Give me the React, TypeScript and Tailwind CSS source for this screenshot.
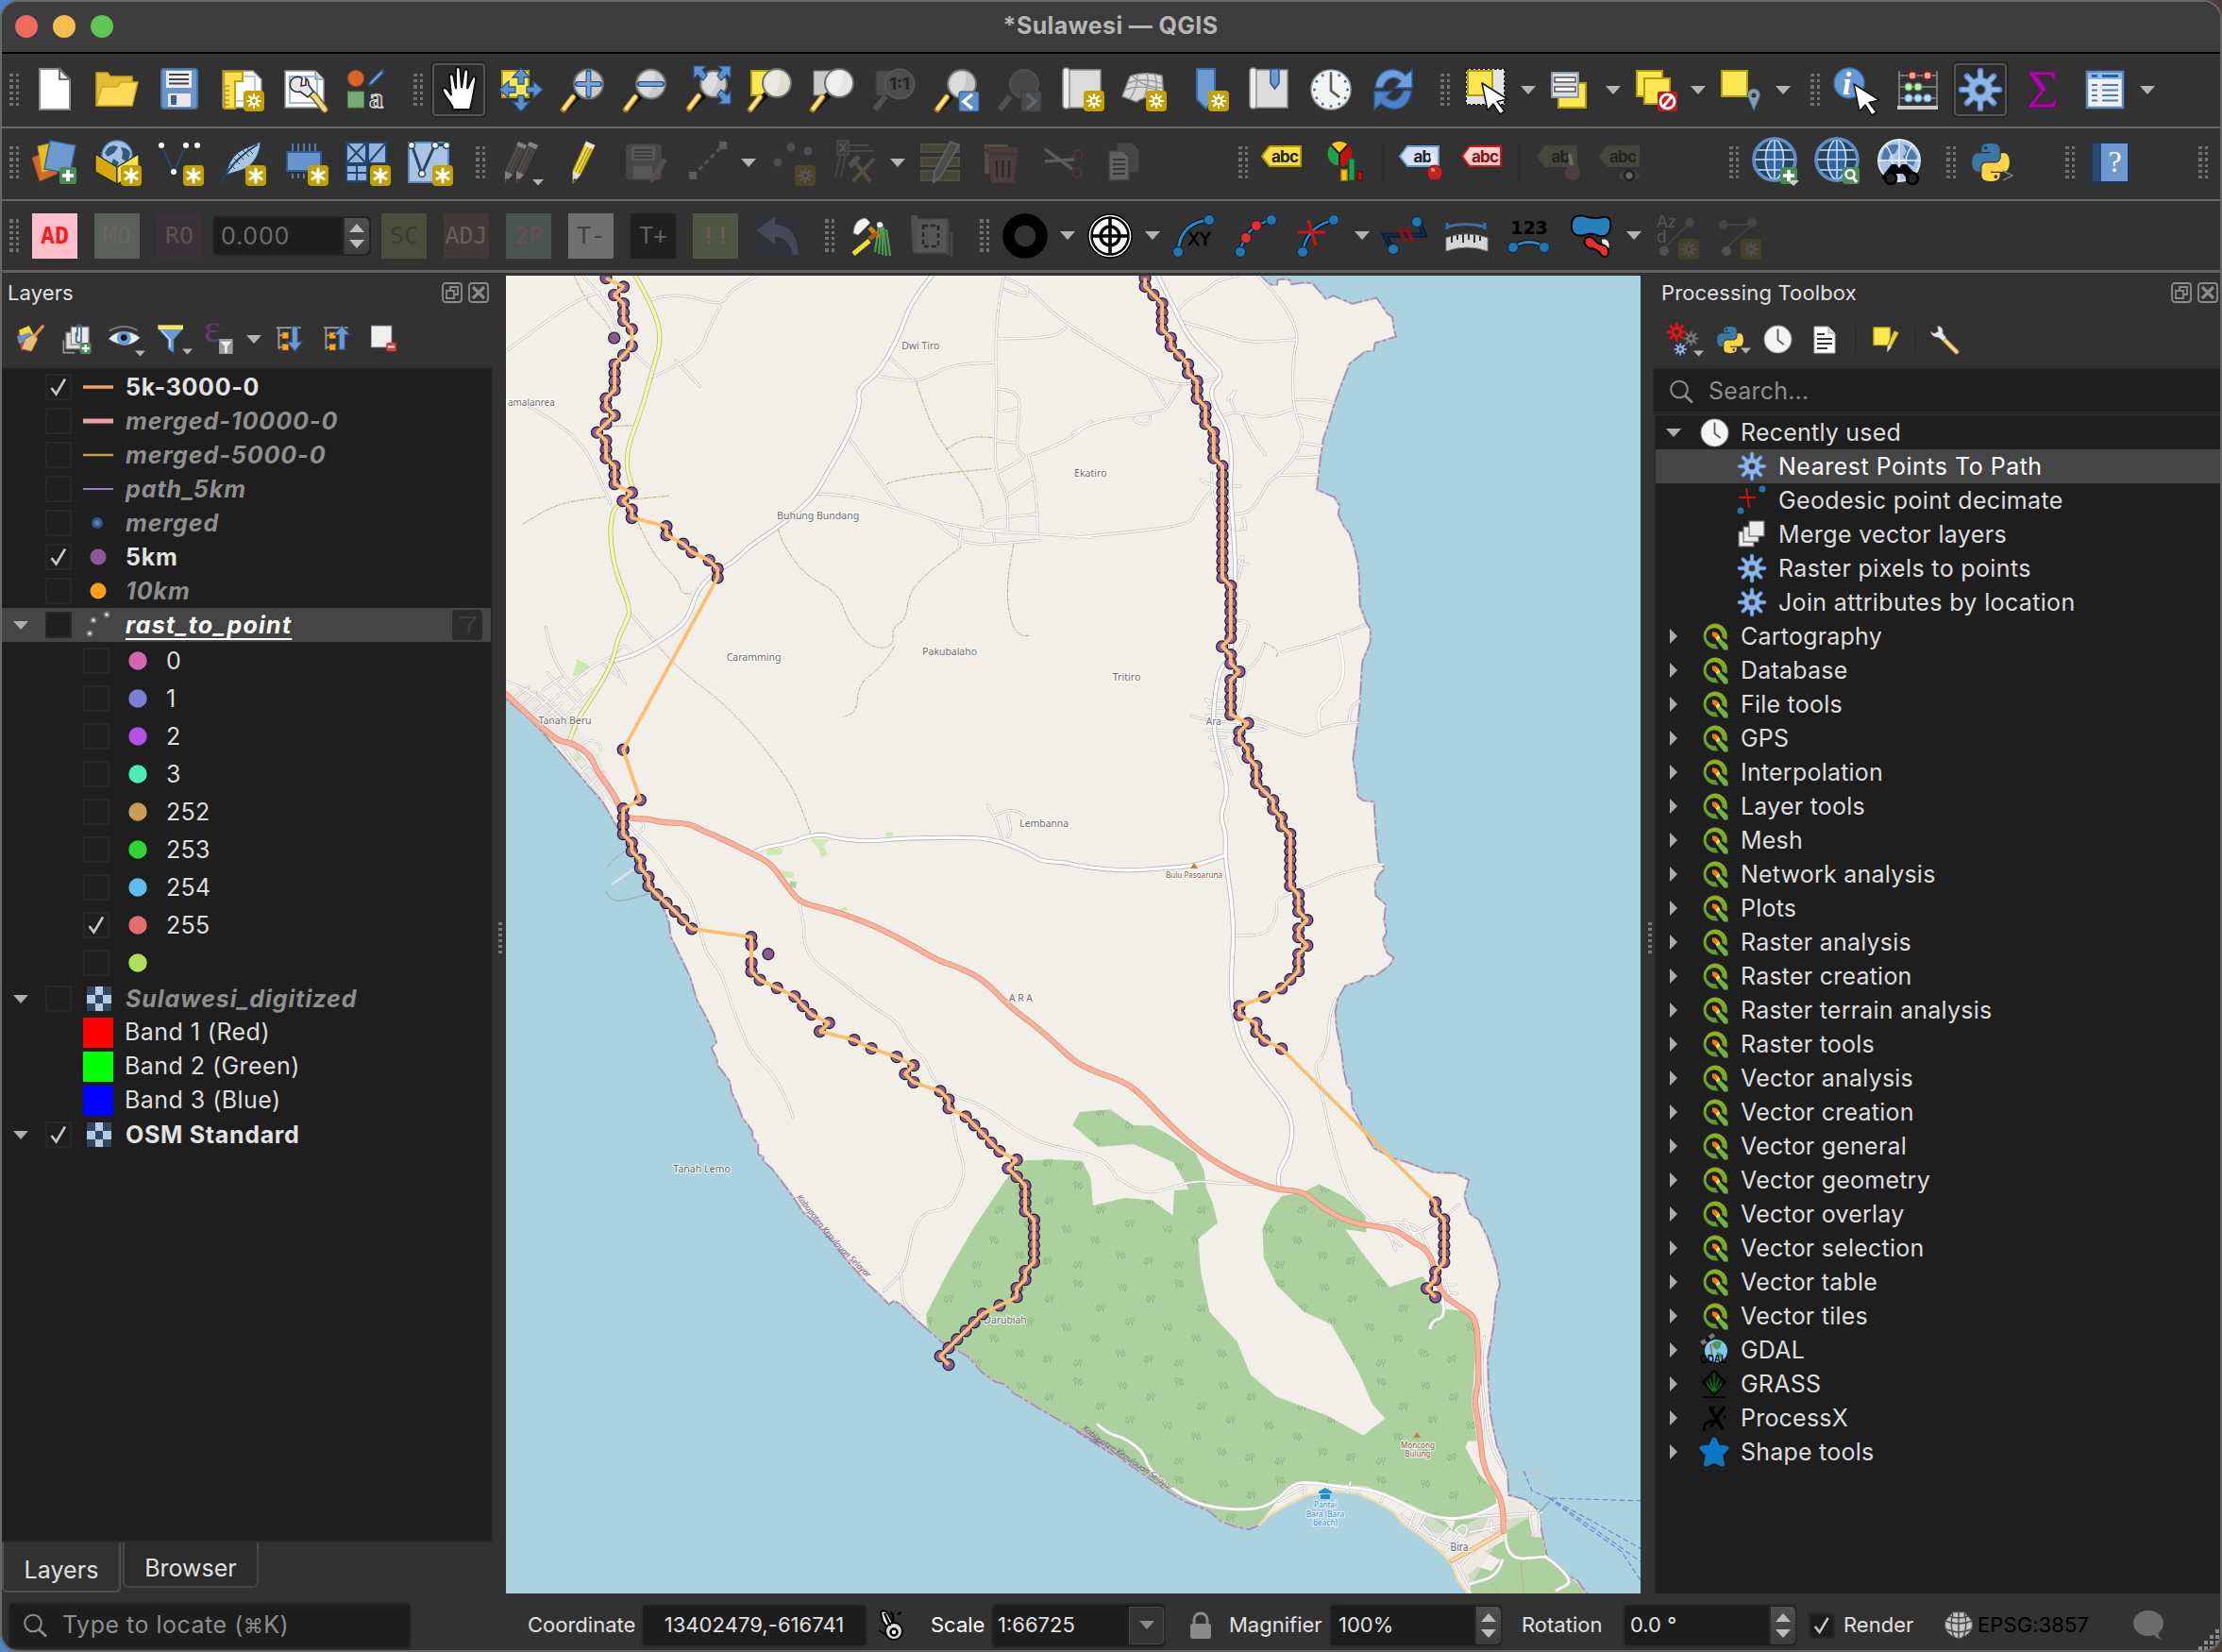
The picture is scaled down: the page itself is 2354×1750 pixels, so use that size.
import React from "react";

/* ------------------------------------------------------------------ */
/* Shared icon parts                                                   */
/* ------------------------------------------------------------------ */

type Kids = { children?: React.ReactNode };

const Ico = ({ children, off, size = 48 }: Kids & { off?: boolean; size?: number }) => (
  <svg
    width={size}
    height={size}
    viewBox="0 0 48 48"
    className={off ? "shrink-0 overflow-visible opacity-30" : "shrink-0 overflow-visible"}
  >
    {children}
  </svg>
);

const Star = ({ x = 26, y = 25, bold = false }) => (
  <g transform={`translate(${x} ${y})`}>
    <rect width="22" height="22" rx="4" fill="#c4a000" />
    <g stroke="#fff" strokeWidth={bold ? 3 : 2.2} strokeLinecap="round">
      {(bold ? [0, 60, 120] : [0, 45, 90, 135]).map((a) => (
        <line key={a} x1="11" y1="4" x2="11" y2="18" transform={`rotate(${a} 11 11)`} />
      ))}
    </g>
    {!bold && <circle cx="11" cy="11" r="3.2" fill="#c4a000" stroke="#fff" strokeWidth="2" />}
  </g>
);

const Plus = ({ x = 29, y = 28, s = 18 }) => (
  <g transform={`translate(${x} ${y}) scale(${s / 18})`}>
    <rect width="18" height="18" rx="3" fill="#4e8a58" />
    <path d="M9 3v12M3 9h12" stroke="#fff" strokeWidth="3.6" />
  </g>
);

const Cursor = ({ x = 20, y = 14 }) => (
  <path
    transform={`translate(${x} ${y})`}
    d="M0 0L27 17L16 19.500L24 30L19 33L12 22L6 29Z"
    fill="#fff"
    stroke="#111"
    strokeWidth="1.500"
    strokeLinejoin="round"
  />
);

const Lens = ({ x = 29.5, y = 18, r = 15.5, fill = "#c9c9c9" }) => (
  <g>
    <path d={`M${x - r * 0.72} ${y + r * 0.8}L3 45`} stroke="#111" strokeWidth="7" />
    <path d="M13 32L3 45" stroke="#a87b12" strokeWidth="6.500" strokeLinecap="round" />
    <path d="M13 31.500L3.500 44" stroke="#fce08a" strokeWidth="4" strokeLinecap="round" />
    <circle cx={x} cy={y} r={r} fill={fill} stroke="#6f6f6f" strokeWidth="2" />
    <path d={`M${x - r + 3} ${y}A${r - 3} ${r - 3} 0 0 1 ${x + 4} ${y - r + 3}Q${x + 6} ${y} ${x - 3} ${y + r - 3}A${r - 3} ${r - 3} 0 0 1 ${x - r + 3} ${y}Z`} fill="#fff" opacity=".35" />
  </g>
);

const Gear = ({ size = 48, fill = "#8fb5ea", edge = "#5d8cc9", hole = "#2b2b2b" }) => (
  <Ico size={size}>
    <g strokeLinecap="round">
      {[0, 45, 90, 135].map((a) => (
        <line key={a} x1="24" y1="4" x2="24" y2="44" stroke={edge} strokeWidth="6.500" transform={`rotate(${a} 24 24)`} />
      ))}
      <circle cx="24" cy="24" r="13.500" fill={edge} />
      {[0, 45, 90, 135].map((a) => (
        <line key={a} x1="24" y1="5" x2="24" y2="43" stroke={fill} strokeWidth="4" transform={`rotate(${a} 24 24)`} />
      ))}
    </g>
    <circle cx="24" cy="24" r="12" fill={fill} />
    <circle cx="24" cy="24" r="5.500" fill={hole} stroke={edge} strokeWidth="1.500" />
  </Ico>
);

const Python = ({ size = 40 }) => (
  <svg width={size} height={size} viewBox="0 0 111 112" className="shrink-0">
    <path fill="#3b78a8" d="M54.919 0C50.335.021 45.958.412 42.106 1.094 30.76 3.099 28.7 7.295 28.7 15.032v10.219h26.813v3.406H18.638c-7.793 0-14.616 4.684-16.75 13.594-2.462 10.213-2.571 16.586 0 27.25 1.905 7.938 6.457 13.594 14.25 13.594h9.219v-12.25c0-8.85 7.657-16.657 16.75-16.657h26.781c7.455 0 13.406-6.138 13.406-13.625v-25.53c0-7.267-6.13-12.726-13.406-13.938C64.282.328 59.502-.02 54.919 0zm-14.5 8.22c2.77 0 5.031 2.298 5.031 5.125 0 2.816-2.262 5.093-5.031 5.093-2.779 0-5.031-2.277-5.031-5.093 0-2.827 2.252-5.125 5.031-5.125z" />
    <path fill="#ffd545" d="M85.638 28.657v11.906c0 9.231-7.826 17-16.75 17H42.106c-7.336 0-13.406 6.279-13.406 13.625V96.72c0 7.266 6.319 11.54 13.406 13.625 8.488 2.495 16.627 2.946 26.782 0 6.75-1.955 13.406-5.888 13.406-13.625V86.501H55.513v-3.405H95.7c7.793 0 10.696-5.436 13.406-13.594 2.799-8.399 2.68-16.476 0-27.25-1.925-7.758-5.604-13.594-13.406-13.594zM70.575 93.313c2.779 0 5.031 2.277 5.031 5.093 0 2.827-2.252 5.125-5.031 5.125-2.77 0-5.031-2.298-5.031-5.125 0-2.816 2.261-5.093 5.031-5.093z" />
  </svg>
);

const Clock = ({ size = 48, ticks = true }) => (
  <Ico size={size}>
    <circle cx="24" cy="24" r="21" fill="#f4f5f3" stroke="#9a9c98" strokeWidth="1.500" />
    {ticks &&
      Array.from({ length: 12 }, (_, i) => (
        <circle key={i} cx="24" cy="6.500" r="1.500" fill="#3d6ea5" transform={`rotate(${i * 30} 24 24)`} />
      ))}
    <path d="M24 8V25L33 32" stroke="#555" strokeWidth="2.600" fill="none" />
  </Ico>
);

const Pencil = ({ x = 0, y = 0, c = "#f1dc3c", d = "#a5931a" }) => (
  <g transform={`translate(${x} ${y})`}>
    <path d="M23 2L32 6L17 37L9 46L9 33Z" fill={c} stroke={d} strokeWidth="1.200" />
    <path d="M26 6L12 34M29 7L15 36" stroke={d} strokeWidth="1.400" />
    <path d="M9 33L17 37L9 46Z" fill="#ddd" />
    <path d="M10 41L9 46L13 42Z" fill="#333" />
    <path d="M23 2L32 6L30 10L21 6Z" fill="#e8e8e8" />
  </g>
);

const GlobeWire = () => (
  <g>
    <circle cx="24" cy="21" r="22" fill="#26435f" stroke="#6f9bd0" strokeWidth="3.500" />
    <ellipse cx="24" cy="21" rx="9.500" ry="21" fill="#2f65a5" stroke="#cfdef0" strokeWidth="1.600" />
    <path d="M3 21H45M6 11H42M6 32H42M24 0V43" stroke="#cfdef0" strokeWidth="1.600" fill="none" />
    <circle cx="24" cy="21" r="22" fill="none" stroke="#5c8cc6" strokeWidth="2.500" />
  </g>
);

const Down = ({ small }: { small?: boolean }) => (
  <svg width={small ? 11 : 16} height={small ? 7 : 9} viewBox="0 0 16 9" className="shrink-0">
    <path d="M0 0H16L8 9Z" fill="#b4b4b4" />
  </svg>
);

/* ------------------------------------------------------------------ */
/* Toolbar building blocks                                             */
/* ------------------------------------------------------------------ */

const Grip = ({ rows = 6 }) => (
  <div className="grid grid-cols-2 gap-x-[3px] gap-y-[3px]">
    {Array.from({ length: rows * 2 }, (_, i) => (
      <span key={i} className="h-[3.200px] w-[3.500px] bg-[#707070]" />
    ))}
  </div>
);

const Slot = ({ children, on }: Kids & { on?: boolean }) => (
  <div className="flex w-[66px] shrink-0 items-center justify-center">
    {on ? (
      <div className="flex h-[60px] w-[60px] items-center justify-center rounded-[6px] border-2 border-[#252525] bg-[#2b2b2b] shadow-[inset_0_0_0_2px_#565656]">
        {children}
      </div>
    ) : (
      children
    )}
  </div>
);

const Menu = ({ children }: Kids) => (
  <div className="flex w-[90px] shrink-0 items-center">
    <Slot>{children}</Slot>
    <div className="flex w-6 justify-center">
      <Down />
    </div>
  </div>
);

const Handle = () => (
  <div className="flex w-8 shrink-0 justify-end pr-[5px]">
    <Grip />
  </div>
);
const FirstHandle = () => (
  <div className="flex w-[23px] shrink-0 justify-end pr-[5px]">
    <Grip />
  </div>
);

const Scroll = () => (
  <g fill="#dcdcdc" stroke="#8d8d8d" strokeWidth="1.500">
    <path d="M8 3H44V43H6Z" />
    <path d="M4 5Q4 1 7.500 1Q11 1 11 5V40Q11 44 7.500 44Q4 44 4 40Z" fill="#eee" />
  </g>
);

const Sq = ({ x, y, w = 27, h = 27 }: { x: number; y: number; w?: number; h?: number }) => (
  <rect x={x} y={y} width={w} height={h} fill="#fbe74f" stroke="#b79a0c" strokeWidth="2" />
);

const Row1 = () => (
  <div className="flex h-[79px] items-center border-b-2 border-[#6a6a6a] bg-[#323232] pb-[1px]">
    <FirstHandle />
    <Slot>
      <Ico>
        <path d="M8 2H29L40 13V45H8Z" fill="#fff" stroke="#8a8a8a" strokeWidth="2" />
        <path d="M29 2V13H40Z" fill="#e8e8e8" stroke="#6c6c6c" strokeWidth="2" />
      </Ico>
    </Slot>
    <Slot>
      <Ico>
        <path d="M2 41V6H14L17 10H40V16" fill="#e3bd33" stroke="#c79d16" strokeWidth="1.500" />
        <path d="M2 41L8 21H24L28 16H46L40 41Z" fill="#fddc5c" stroke="#d0a51c" strokeWidth="1.500" />
      </Ico>
    </Slot>
    <Slot>
      <Ico>
        <rect x="5" y="2" width="38" height="42" rx="3" fill="#6b96cc" stroke="#4a72a6" strokeWidth="2" />
        <rect x="10" y="4" width="27" height="18" fill="#ececec" />
        <path d="M13 8H34M13 13H34M13 17.500H34" stroke="#444" strokeWidth="2" />
        <rect x="12" y="28" width="24" height="14" fill="#e9e9e9" />
        <rect x="15" y="30" width="6" height="10" fill="#3a5f90" />
      </Ico>
    </Slot>
    <Slot>
      <Ico>
        <path d="M4 4H36L45 13V43H4Z" fill="#fff" stroke="#8d8d8d" strokeWidth="1.500" />
        <path d="M12 10H38V36H12Z" fill="none" stroke="#9fb7ef" strokeWidth="1.500" />
        <path d="M5 5H25V15H17V44H6Z" fill="#fbe152" stroke="#c4a000" strokeWidth="2" />
        <path d="M6 20h5M6 25h5M6 30h5M6 35h5M6 40h5" stroke="#8a7200" strokeWidth="1.200" />
        <Star />
      </Ico>
    </Slot>
    <Slot>
      <Ico>
        <path d="M4 4H36L45 13V43H4Z" fill="#fff" stroke="#8d8d8d" strokeWidth="1.500" />
        <path d="M36 4V13H45" fill="#ddd" stroke="#8d8d8d" strokeWidth="1.500" />
        <path d="M9 10H38V38H9Z" fill="none" stroke="#9fb7ef" strokeWidth="2" />
        <path d="M30 26L36 32L46 45" stroke="#6f5c14" strokeWidth="8" strokeLinecap="round" />
        <path d="M30 26L36 32L46 45" stroke="#ead88c" strokeWidth="5" strokeLinecap="round" />
        <path d="M22 12A8 8 0 1 0 20 26L28 32L34 26L29 19A8 8 0 0 0 26 12L26 19L21 20Z" fill="#e6e6e6" stroke="#333" strokeWidth="1.600" />
      </Ico>
    </Slot>
    <Slot>
      <Ico>
        <circle cx="13" cy="12" r="8.500" fill="#d9652b" stroke="#a8481a" />
        <path d="M28 18L41 5" stroke="#2f5687" strokeWidth="5" strokeLinecap="round" />
        <path d="M29 17L40 6" stroke="#7ca5d8" strokeWidth="2" strokeLinecap="round" />
        <rect x="4.500" y="26" width="17" height="17" fill="#77ab72" stroke="#4f8a4c" />
        <text x="27" y="43" fontSize="30" fontWeight="700" fontFamily="Liberation Serif, serif" fill="#444" stroke="#ddd" strokeWidth="1.300">a</text>
      </Ico>
    </Slot>
    <Handle />
    <Slot on>
      <Ico>
        <path transform="translate(3 -1)" d="M15 46C15 40 6 33 4 26C3.500 23 7 22 9 25L13 31L11 11C11 7.500 15 7.500 15.500 11L18 24L18 4C18 0 22.500 0 22.500 4L24 23L26.500 6C27 2.500 31 3 31 6.500L30 24L35 13C36.500 10 40 11 39 15L36 32C35 38 34 41 33 46Z" fill="#fff" stroke="#111" strokeWidth="2" />
      </Ico>
    </Slot>
    <Slot>
      <Ico>
        <Sq x={4} y={4} w={28} h={28} />
        <g fill="#5f93cf" stroke="#28528a" strokeWidth="1.300">
          <path d="M24 1L33 11H27V18H21V11H15Z" />
          <path d="M24 47L33 37H27V30H21V37H15Z" />
          <path d="M1 24L11 15V21H18V27H11V33Z" />
          <path d="M47 24L37 15V21H30V27H37V33Z" />
        </g>
      </Ico>
    </Slot>
    <Slot>
      <Ico>
        <Lens />
        <path d="M29.500 6V30M18 18H41" stroke="#28528a" strokeWidth="6" strokeLinecap="round" />
        <path d="M29.500 6.500V29.500M18.500 18H40.500" stroke="#7ba4d6" strokeWidth="3.600" strokeLinecap="round" />
      </Ico>
    </Slot>
    <Slot>
      <Ico>
        <Lens />
        <path d="M18 18H41" stroke="#28528a" strokeWidth="6" strokeLinecap="round" />
        <path d="M18.500 18H40.500" stroke="#7ba4d6" strokeWidth="3.600" strokeLinecap="round" />
      </Ico>
    </Slot>
    <Slot>
      <Ico>
        <g transform="translate(1 -1)">
          <Lens x={29} y={19} r={14} />
          <g fill="#5f93cf" stroke="#28528a" strokeWidth="1.200">
            <path d="M8 0H21L17 4L22 10L18 15L12 9L8 13Z" />
            <path d="M47 0H34L38 4L33 10L37 15L43 9L47 13Z" />
            <path d="M47 40H34L38 36L33 30L37 25L43 31L47 27Z" />
          </g>
        </g>
      </Ico>
    </Slot>
    <Slot>
      <Ico>
        <Sq x={4} y={4} w={28} h={26} />
        <Lens x={31} y={17} r={15} fill="#dfdfcf" />
      </Ico>
    </Slot>
    <Slot>
      <Ico>
        <rect x="4" y="4" width="26" height="26" fill="#c9c9c9" stroke="#777" />
        <Lens x={31} y={17} r={15} fill="#e6e6e6" />
      </Ico>
    </Slot>
    <Slot>
      <Ico off>
        <rect x="4" y="4" width="26" height="26" fill="#888" stroke="#555" />
        <path d="M14 31L3 45" stroke="#999" strokeWidth="6" />
        <circle cx="29" cy="18" r="15.500" fill="#888" stroke="#aaa" strokeWidth="2" />
        <text x="29" y="24" textAnchor="middle" fontSize="18" fontWeight="700" fontFamily="Inter, sans-serif" fill="#000">1:1</text>
      </Ico>
    </Slot>
    <Slot>
      <Ico>
        <Lens x={29} y={18} r={15} />
        <rect x="26" y="26" width="21" height="21" rx="2" fill="#5f8fc9" stroke="#28528a" />
        <path d="M40 29L31 36.500L40 44" stroke="#fff" strokeWidth="3.500" fill="none" />
      </Ico>
    </Slot>
    <Slot>
      <Ico off>
        <path d="M14 31L3 45" stroke="#999" strokeWidth="6" />
        <circle cx="29" cy="18" r="15" fill="#777" stroke="#999" strokeWidth="2" />
        <rect x="26" y="26" width="21" height="21" rx="2" fill="#7d8894" stroke="#555" />
        <path d="M32 29L41 36.500L32 44" stroke="#ddd" strokeWidth="3" fill="none" />
      </Ico>
    </Slot>
    <Slot>
      <Ico>
        <Scroll />
        <Star />
      </Ico>
    </Slot>
    <Slot>
      <Ico>
        <path d="M9 10Q24 4 43 9L45 34Q28 28 16 37L1 31Z" fill="#dadada" stroke="#8a8a8a" strokeWidth="1.500" />
        <path d="M7 17Q24 10 44 18M4 24Q20 17 45 27M17 7Q18 20 9 34M27 6Q30 18 24 32M35 7Q40 20 34 31M12 10Q24 22 44 22" stroke="#999" strokeWidth="1.400" fill="none" />
        <Star />
      </Ico>
    </Slot>
    <Slot>
      <Ico>
        <path d="M14 2H33V34L23.500 44L14 34Z" fill="#6d9bd4" stroke="#3c6ba5" strokeWidth="2" />
        <Star />
      </Ico>
    </Slot>
    <Slot>
      <Ico>
        <Scroll />
        <path d="M26 2H35V17L30.500 23L26 17Z" fill="#6d9bd4" stroke="#28528a" strokeWidth="1.500" />
      </Ico>
    </Slot>
    <Slot>
      <Clock />
    </Slot>
    <Slot>
      <Ico>
        <path d="M5 22C6 8 16 1 26 3C31 4 34 6 37 9L44 3V22H26L32 15C26 9 17 10 13 22Z" fill="#6fa0dc" stroke="#2e5f9f" strokeWidth="1.500" />
        <path d="M43 25C42 39 32 46 22 44C17 43 14 41 11 38L4 45V26H22L16 32C22 38 31 37 35 25Z" fill="#4d82c6" stroke="#2e5f9f" strokeWidth="1.500" />
      </Ico>
    </Slot>
    <Handle />
    <Menu>
      <Ico>
        <rect x="3" y="2" width="41" height="38" fill="#e4e4e4" stroke="#222" strokeWidth="2" strokeDasharray="3 2" />
        <Sq x={5} y={4} w={26} h={26} />
        <Cursor x={20} y={17} />
      </Ico>
    </Menu>
    <Menu>
      <Ico>
        <Sq x={11} y={17} w={29} h={26} />
        <rect x="4" y="6" width="28" height="26" fill="#d9dde2" stroke="#8e99a5" strokeWidth="2" />
        <path d="M7 11H29V16H7ZM7 21H29V26H7Z" fill="#fff" stroke="#555" strokeWidth="1.500" />
      </Ico>
    </Menu>
    <Menu>
      <Ico>
        <Sq x={4} y={4} />
        <Sq x={12} y={12} />
        <rect x="26" y="26" width="21" height="21" rx="2" fill="#c9171e" />
        <circle cx="36.500" cy="36.500" r="7.500" fill="none" stroke="#fff" strokeWidth="3" />
        <path d="M32 42L41 31" stroke="#fff" strokeWidth="3" />
      </Ico>
    </Menu>
    <Menu>
      <Ico>
        <Sq x={4} y={4} />
        <path d="M38 46L32.500 33A6.500 6.500 0 1 1 43.500 33Z" fill="#7f9db2" stroke="#4b6b80" />
        <circle cx="38" cy="30" r="2.500" fill="#333" />
      </Ico>
    </Menu>
    <Handle />
    <Slot>
      <Ico>
        <circle cx="17" cy="17" r="16" fill="#6b97cf" stroke="#3d6ba3" strokeWidth="1.500" />
        <text x="10" y="29" fontSize="33" fontStyle="italic" fontWeight="700" fontFamily="Liberation Serif, serif" fill="#fff">i</text>
        <Cursor x={22} y={18} />
      </Ico>
    </Slot>
    <Slot>
      <Ico>
        <path d="M4 4V44M44 4V44M4 9H44M4 21H44M4 33H44" stroke="#777" strokeWidth="2" />
        <path d="M2 43H45" stroke="#ccc" strokeWidth="4" />
        <g strokeWidth="1.500">
          <g fill="#f3a3a3" stroke="#b31c1c"><circle cx="18" cy="9" r="4" /><circle cx="34" cy="9" r="4" /></g>
          <g fill="#c4eac0" stroke="#58a058"><circle cx="14" cy="21" r="4" /><circle cx="24" cy="21" r="4" /></g>
          <g fill="#bfe0f5" stroke="#5e9cc4"><circle cx="14" cy="33" r="4" /><circle cx="24" cy="33" r="4" /><circle cx="34" cy="33" r="4" /></g>
        </g>
      </Ico>
    </Slot>
    <Slot on>
      <Gear />
    </Slot>
    <Slot>
      <Ico>
        <path d="M10 5H37V13H35Q34 8.500 30 8.500H17L28 23L15 39H31Q36 39 37 33H39L37 43H9V41L22 25L10 8Z" fill="#a80aa8" stroke="#6d066d" />
      </Ico>
    </Slot>
    <Menu>
      <Ico>
        <rect x="5" y="5" width="38" height="38" fill="#eef0f2" stroke="#5c87bf" strokeWidth="2.500" />
        <path d="M6 6H42V13H6Z" fill="#8fb8ea" />
        <path d="M10 9.500H16M21 9.500H38" stroke="#2d5c9a" strokeWidth="3" />
        <path d="M10 19H16M21 19H38M10 24.500H16M21 24.500H38M10 30H16M21 30H38M10 35.500H16M21 35.500H38" stroke="#4d7cb8" strokeWidth="2" />
      </Ico>
    </Menu>
  </div>
);

const Tag = ({ text, fill, edge, ink = "#222" }: { text: string; fill: string; edge: string; ink?: string }) => (
  <g transform="translate(0 -1)">
    <path d="M1 18.500L9 8H42V29H9Z" fill={fill} stroke={edge} strokeWidth="2" />
    <text x="25" y="24.500" textAnchor="middle" fontSize="17" fontWeight="700" fontFamily="Inter, sans-serif" letterSpacing="-.8" fill={ink}>{text}</text>
  </g>
);

const Dots3 = ({ c = "#fff" }) => (
  <g fill={c}>
    <circle cx="5" cy="6" r="3" />
    <circle cx="31" cy="6" r="3" />
    <circle cx="43" cy="6" r="3" />
    <circle cx="18" cy="34" r="3" />
  </g>
);

const Row2 = () => (
  <div className="flex h-[77px] items-center border-b-2 border-[#6a6a6a] bg-[#323232] pb-[3px]">
    <FirstHandle />
    <Slot>
      <Ico>
        <path d="M0 19L18 12L27 36L8 44Z" fill="#d9652b" stroke="#a8481a" />
        <path d="M6 7L22 3L30 30L10 35Z" fill="#e8bd1f" stroke="#b08d0a" />
        <path d="M19 1L46 6L40 36L13 31Z" fill="#6d98d0" stroke="#35629b" strokeWidth="1.500" />
        <Plus x={29} y={29} />
      </Ico>
    </Slot>
    <Slot>
      <Ico>
        <circle cx="24" cy="17" r="16" fill="#a4c1e3" stroke="#5d87bd" strokeWidth="1.500" />
        <path d="M14 9Q20 4 25 8L21 14L14 18L11 14ZM28 8Q36 8 38 15L35 24L29 20L30 14ZM20 20L26 24L23 31L18 26Z" fill="#35587f" />
        <path d="M1 15L24 29V47L1 34Z" fill="#d6a80a" stroke="#222" strokeWidth="1.200" />
        <path d="M47 15L24 29V47L47 34Z" fill="#f7e04a" stroke="#222" strokeWidth="1.200" />
        <Star x={28} y={27} bold />
      </Ico>
    </Slot>
    <Slot>
      <Ico>
        <path d="M5 6L18 34L31 6" stroke="#284a72" strokeWidth="1.800" fill="none" />
        <Dots3 />
        <Star x={28} y={27} bold />
      </Ico>
    </Slot>
    <Slot>
      <Ico>
        <path d="M44 2Q44 10 40 18Q34 30 22 33L8 37Q10 18 26 10Q38 5 44 2Z" fill="#a9c6e6" stroke="#26435f" strokeWidth="1.300" />
        <path d="M41 5Q20 18 10 33Q4 40 2 46" stroke="#26435f" strokeWidth="2" fill="none" />
        <path d="M20 15L26 21M16 20L22 26M30 9L36 15M25 11L32 18M12 26L17 31" stroke="#26435f" strokeWidth="1" />
        <Star x={28} y={27} bold />
      </Ico>
    </Slot>
    <Slot>
      <Ico>
        <path d="M12 4V12M18 4V12M24 4V12M30 4V12M36 4V12M12 36V41M18 36V41M24 36V41" stroke="#4f7bb2" strokeWidth="2" />
        <rect x="6" y="13" width="36" height="20" fill="#6895cf" stroke="#2f5a92" strokeWidth="2" />
        <Star x={28} y={27} bold />
      </Ico>
    </Slot>
    <Slot>
      <Ico>
        <g fill="#8fb3de" stroke="#26436b" strokeWidth="2">
          <path d="M3 3H24V25H3ZM26 3H45V25H26ZM3 27H14V35H3ZM14 27H25V35H14ZM3 35H14V44H3ZM14 35H25V44H14Z" />
          <path d="M3 3L24 25M24 3L3 25M45 3L26 25" fill="none" />
        </g>
        <Star x={28} y={27} bold />
      </Ico>
    </Slot>
    <Slot>
      <Ico>
        <rect x="3" y="3" width="42" height="42" fill="#a9c3e4" stroke="#5d87bd" strokeWidth="2" />
        <path d="M6 5L17 36L31 5L43 6" stroke="#26435f" strokeWidth="3" fill="none" />
        <g fill="#fff" stroke="#26435f" strokeWidth="1.500">
          <circle cx="6" cy="6" r="3.500" /><circle cx="31" cy="6" r="3.500" /><circle cx="43" cy="6" r="3.500" /><circle cx="17" cy="36" r="3.500" />
        </g>
        <Star x={28} y={27} bold />
      </Ico>
    </Slot>
    <Handle />
    <Slot>
      <Ico>
        <g opacity=".45">
          <Pencil x={-2} c="#7c6f6a" d="#4e4742" />
          <Pencil x={10} c="#7c6f6a" d="#4e4742" />
        </g>
        <path d="M36 42H48L42 48.500Z" fill="#b4b4b4" />
      </Ico>
    </Slot>
    <Slot>
      <Ico>
        <Pencil x={4} />
      </Ico>
    </Slot>
    <Slot>
      <Ico off>
        <rect x="4" y="5" width="36" height="37" rx="3" fill="#777" stroke="#888" />
        <rect x="9" y="7" width="25" height="15" fill="#aaa" />
        <path d="M12 11H31M12 15H31M12 19H31" stroke="#555" strokeWidth="2" />
        <rect x="11" y="28" width="20" height="13" fill="#aaa" />
        <path d="M42 19L47 22L35 42L29 46L30 38Z" fill="#a09088" />
      </Ico>
    </Slot>
    <Slot>
      <Ico off>
        <path d="M8 38L40 6" stroke="#aaa" strokeWidth="3" strokeDasharray="5 4" />
        <rect x="4" y="34" width="8" height="8" fill="#bbb" />
        <rect x="36" y="2" width="8" height="8" fill="#bbb" />
      </Ico>
    </Slot>
    <div className="flex w-6 shrink-0 justify-center pr-1"><Down /></div>
    <Slot>
      <Ico off>
        <g fill="#999"><circle cx="22" cy="8" r="4.500" /><circle cx="40" cy="12" r="4.500" /><circle cx="8" cy="24" r="4.500" /></g>
        <g opacity=".6"><Star x={26} y={27} /></g>
      </Ico>
    </Slot>
    <div className="flex w-[90px] shrink-0 items-center">
      <Slot>
        <Ico off>
          <path d="M3 40L9 12M9 40L14 14M18 6H38M16 12H44" stroke="#777" strokeWidth="2" />
          <rect x="5" y="1" width="12" height="15" fill="#555" stroke="#aaa" />
          <path d="M8 4L14 13M14 4L8 13" stroke="#aaa" strokeWidth="2" />
          <path d="M24 24L40 44M44 20L22 44" stroke="#a39070" strokeWidth="4" />
          <path d="M18 28L28 18" stroke="#999" strokeWidth="6" />
        </Ico>
      </Slot>
      <div className="flex w-6 justify-center"><Down /></div>
    </div>
    <Slot>
      <Ico off>
        <path d="M4 5H44V13H4ZM4 19H44V28H4ZM4 33H44V43H4Z" fill="#6f6b48" stroke="#9a9768" strokeWidth="2" />
        <path d="M35 2L44 6L25 38L17 45L18 34Z" fill="#888" stroke="#ccc" strokeWidth="2" />
      </Ico>
    </Slot>
    <Slot>
      <Ico off>
        <path d="M5 5H30V10H5ZM5 12H10V36H5Z" fill="#99936a" />
        <path d="M8 9H40V14H8ZM10 17H39L36 45H13Z" fill="#8a5a5a" stroke="#804848" strokeWidth="2" />
        <path d="M18 22V40M24.500 22V40M31 22V40" stroke="#201414" strokeWidth="2.500" />
      </Ico>
    </Slot>
    <Slot>
      <Ico off>
        <g transform="translate(0 1)">
          <path d="M3 9L32 30M3 22L34 20" stroke="#bbb" strokeWidth="3.500" />
          <ellipse cx="38" cy="15" rx="4.500" ry="5" fill="none" stroke="#8a4444" strokeWidth="2.500" />
          <ellipse cx="37" cy="34" rx="4.500" ry="5" fill="none" stroke="#8a4444" strokeWidth="2.500" />
        </g>
      </Ico>
    </Slot>
    <Slot>
      <Ico off>
        <path d="M14 4H29L36 11V34H14Z" fill="#777" stroke="#777" />
        <path d="M5 12H20L26 18V43H5Z" fill="#ccc" stroke="#666" strokeWidth="1.500" />
        <path d="M9 21H22M9 26H22M9 31H22M9 36H22" stroke="#444" strokeWidth="2" />
      </Ico>
    </Slot>
    <div className="flex w-[100px] shrink-0 justify-end pr-[5px]"><Grip /></div>
    <Slot>
      <Ico><Tag text="abc" fill="#fbe04a" edge="#b89a00" /></Ico>
    </Slot>
    <Slot>
      <Ico>
        <g transform="translate(3 -1)">
          <circle cx="14" cy="16" r="13" fill="#18a34c" stroke="#4c3310" strokeWidth="1" />
          <path d="M14 16L5 6.500A13 13 0 0 1 23 6.500Z" fill="#fbc81e" />
          <path d="M14 16L23 6.500A13 13 0 0 1 14 29Z" fill="#c01010" />
          <path d="M14 16L5 6.500M14 16L23 6.500M14 16V29" stroke="#222" strokeWidth="2" />
          <path d="M16 33H22V44H16Z" fill="#fbc81e" stroke="#c88700" strokeWidth="1.500" />
          <path d="M24 21H30V44H24Z" fill="#18a34c" stroke="#0c5b29" strokeWidth="1" />
          <path d="M33 35H38V44H33Z" fill="#c01010" stroke="#6c0808" strokeWidth="1.500" />
        </g>
      </Ico>
    </Slot>
    <div className="flex w-3 shrink-0 justify-center"><span className="h-[40px] w-[2px] bg-[#2a2a2a]" /></div>
    <Slot>
      <Ico>
        <g transform="translate(2 0)">
          <Tag text="ab " fill="#cfe3fb" edge="#6d9bd4" />
          <path d="M35 17L38 32" stroke="#eee" strokeWidth="4" strokeLinecap="round" />
          <circle cx="38" cy="35" r="8" fill="#bf2424" stroke="#7f1010" />
          <circle cx="36" cy="32" r="2" fill="#e88" />
        </g>
      </Ico>
    </Slot>
    <Slot>
      <Ico><g transform="translate(2 0)"><Tag text="abc" fill="#f8d3d3" edge="#dc1414" ink="#8d1010" /></g></Ico>
    </Slot>
    <div className="flex w-3 shrink-0 justify-center"><span className="h-[40px] w-[2px] bg-[#2a2a2a]" /></div>
    <Slot>
      <Ico off>
        <g transform="translate(4 0)">
          <Tag text="ab " fill="#77765f" edge="#6f6e5d" ink="#000" />
          <path d="M35 17L38 32" stroke="#eee" strokeWidth="4" strokeLinecap="round" />
          <circle cx="38" cy="35" r="8" fill="#8a5f5f" />
        </g>
      </Ico>
    </Slot>
    <Slot>
      <Ico off>
        <g transform="translate(4 0)">
          <Tag text="abc" fill="#77765f" edge="#6f6e5d" ink="#000" />
          <ellipse cx="32" cy="38" rx="11" ry="6" fill="#666" />
          <circle cx="32" cy="38" r="5" fill="#dde" stroke="#000" strokeWidth="3" />
        </g>
      </Ico>
    </Slot>
    <div className="flex w-[100px] shrink-0 justify-end pr-[5px]"><Grip /></div>
    <Slot>
      <Ico>
        <GlobeWire />
        <Plus x={30} y={29} s={18} />
        <path d="M38 43H50L44 49Z" fill="#ccc" />
      </Ico>
    </Slot>
    <Slot>
      <Ico>
        <GlobeWire />
        <rect x="30" y="29" width="18" height="18" rx="3" fill="#4e8a58" />
        <circle cx="38" cy="36.500" r="4.500" fill="none" stroke="#fff" strokeWidth="2.500" />
        <path d="M41 40L45 45" stroke="#fff" strokeWidth="3" />
      </Ico>
    </Slot>
    <Slot>
      <Ico>
        <circle cx="24" cy="22" r="22" fill="#a7c3e4" stroke="#dce9f7" strokeWidth="2" />
        <path d="M8 10Q16 3 24 6L20 14L14 17L12 24L5 20ZM28 5Q38 7 43 18L39 28L32 24L28 18L32 12Z" fill="#4f78ac" />
        <path d="M3 22H45M24 1V43M10 6Q24 24 10 40M38 6Q24 24 38 40" stroke="#eef5fc" strokeWidth="1.300" fill="none" />
        <path d="M16 26H21L24 30L27 26H32L44 40L36 46L28 36H20L12 46L5 40Z" fill="#0a0a0a" />
        <circle cx="15" cy="41" r="6" fill="#222" stroke="#000" strokeWidth="2.500" />
        <circle cx="38" cy="41" r="6" fill="#222" stroke="#000" strokeWidth="2.500" />
      </Ico>
    </Slot>
    <Handle />
    <div className="flex w-[66px] shrink-0 items-center pl-3">
      <Python />
      <svg width="12" height="12" viewBox="0 0 12 12" className="mt-7 -ml-2"><path d="M1 1L11 6L1 11" stroke="#777" strokeWidth="1.800" fill="none" /></svg>
    </div>
    <div className="flex w-[60px] shrink-0 justify-end pr-[5px]"><Grip /></div>
    <Slot>
      <Ico>
        <rect x="4" y="3" width="39" height="42" fill="#6d98d0" stroke="#1d3557" strokeWidth="2" />
        <rect x="5" y="4" width="9" height="40" fill="#2b4a73" />
        <text x="28.500" y="34" textAnchor="middle" fontSize="32" fontFamily="Liberation Serif, serif" fill="#fff">?</text>
      </Ico>
    </Slot>
    <div className="flex w-[75px] shrink-0 justify-end pr-[5px]"><Grip /></div>
  </div>
);

const Box = ({ t, cls }: { t: string; cls: string }) => (
  <Slot>
    <div className={`flex h-12 w-12 items-center justify-center font-['DejaVu_Sans_Mono',monospace] text-[25px] ${cls}`}>{t}</div>
  </Slot>
);

const Steps = ({ cls = "" }) => (
  <div className={`flex w-[28px] shrink-0 flex-col items-center justify-center gap-2 rounded-r-[5px] border-l-2 border-[#2a2a2a] bg-gradient-to-b from-[#505050] to-[#3c3c3c] ${cls}`}>
    <svg width="16" height="9" viewBox="0 0 16 9"><path d="M0 9H16L8 0Z" fill="#bcbcbc" /></svg>
    <svg width="16" height="9" viewBox="0 0 16 9"><path d="M0 0H16L8 9Z" fill="#bcbcbc" /></svg>
  </div>
);

const Node = ({ x, y, c = "#1f78b4" }: { x: number; y: number; c?: string }) => (
  <circle cx={x} cy={y} r="5.500" fill={c} stroke="#0a2238" strokeWidth="1" />
);

const Row3 = () => (
  <div className="flex h-[76px] items-center border-b-[3px] border-[#5f5f5f] bg-[#323232]">
    <FirstHandle />
    <Box t="AD" cls="bg-[#ffc0cb] text-[#ff1a1a] tracking-[0px] font-semibold" />
    <Box t="MO" cls="bg-[#5a615a] text-[#6b6563]" />
    <Box t="RO" cls="bg-[#3a3239] text-[#5c5450]" />
    <div className="mr-[2px] ml-[2px] flex h-[42px] w-[168px] shrink-0 rounded-[5px] border-2 border-[#252525] bg-[#1d1d1d]">
      <span className="flex-1 pt-[1px] pl-[7px] text-[25px] leading-[36px] tracking-[0.8px] text-[#6e6e6e]">0.000</span>
      <Steps />
    </div>
    <div className="flex shrink-0">
      <Box t="SC" cls="bg-[#4d4d3d] text-[#333e2f]" />
      <Box t="ADJ" cls="bg-[#413838] text-[#665f5b]" />
      <Box t="2P" cls="bg-[#4a5453] text-[#6a5055]" />
      <Box t="T-" cls="bg-[#6f6f6f] text-[#3f3f3f]" />
      <Box t="T+" cls="bg-[#202020] text-[#606060]" />
      <Box t="!!" cls="bg-[#4e5744] text-[#7d5546]" />
      <Slot>
        <Ico>
          <rect x="1" y="2" width="46" height="46" fill="#303138" />
          <path d="M1 18L21 3V12Q44 12 46 44H40Q36 25 21 25V33Z" fill="#454859" />
        </Ico>
      </Slot>
    </div>
    <Handle />
    <Slot>
      <Ico>
        <g transform="translate(3 1)">
          <path d="M26 40L30 12M30 42L32 14M34 43L34 10M38 44L35 14M42 44L38 16" stroke="#4f9e57" strokeWidth="2.200" />
          <path d="M20 14L30 24" stroke="#c8841d" strokeWidth="5" />
          <path d="M3 20Q4 5 16 4L21 9L8 22Z" fill="#f2f2f2" stroke="#888" />
          <path d="M3 42L20 28" stroke="#e9e235" strokeWidth="5" />
          <path d="M20 26L28 20" stroke="#b3590e" strokeWidth="5" />
          <circle cx="31" cy="11" r="3" fill="#eee" />
        </g>
      </Ico>
    </Slot>
    <Slot>
      <Ico off>
        <path d="M6 6H40V42H4Z" fill="#aaa" stroke="#777" />
        <path d="M1 2H8V40H3Z" fill="#999" />
        <rect x="14" y="13" width="16" height="22" fill="none" stroke="#111" strokeWidth="2.500" strokeDasharray="5 3" />
        <path d="M40 8V44M44 20V46" stroke="#777" strokeWidth="3" />
      </Ico>
    </Slot>
    <Handle />
    <Menu>
      <Ico><circle cx="24" cy="24" r="17.500" fill="none" stroke="#000" strokeWidth="12.500" /></Ico>
    </Menu>
    <Menu>
      <Ico>
        <circle cx="24" cy="24" r="23" fill="#fff" stroke="#000" strokeWidth="1.500" />
        <circle cx="24" cy="24" r="19.500" fill="none" stroke="#000" strokeWidth="2.500" />
        <circle cx="24" cy="24" r="10" fill="none" stroke="#000" strokeWidth="3.500" />
        <path d="M24 4V44M4 24H44" stroke="#000" strokeWidth="3.500" />
      </Ico>
    </Menu>
    <Slot>
      <Ico>
        <path d="M6 41Q8 10 39 7" stroke="#06121e" strokeWidth="5" fill="none" />
        <path d="M6 41Q8 10 39 7" stroke="#2a86c8" strokeWidth="3" fill="none" />
        <Node x={39} y={7} /><Node x={6} y={41} />
        <text x="16" y="34" fontSize="19" fontFamily="DejaVu Sans, sans-serif" fill="#000" stroke="#000" strokeWidth=".5">XY</text>
      </Ico>
    </Slot>
    <Slot>
      <Ico>
        <path d="M6 41Q10 14 39 7" stroke="#06121e" strokeWidth="5" fill="none" />
        <path d="M6 41Q10 14 39 7" stroke="#2a86c8" strokeWidth="2.500" fill="none" />
        <Node x={39} y={7} /><Node x={6} y={41} /><Node x={12} y={26} c="#ee2b2b" /><Node x={23} y={13} c="#ee2b2b" />
      </Ico>
    </Slot>
    <Menu>
      <Ico>
        <path d="M6 41Q10 14 39 7" stroke="#06121e" strokeWidth="5" fill="none" />
        <path d="M6 41Q10 14 39 7" stroke="#2a86c8" strokeWidth="2.500" fill="none" />
        <Node x={39} y={7} /><Node x={6} y={41} />
        <path d="M12 7L20 34M1 20H30" stroke="#d41111" strokeWidth="3" />
      </Ico>
    </Menu>
    <Slot>
      <Ico>
        <path d="M39 8L45 23H3L11 38" stroke="#061a30" strokeWidth="5" fill="none" />
        <path d="M39 8L45 23H3L11 38" stroke="#0f3a60" strokeWidth="1.500" fill="none" />
        <path d="M18 16L25 30M25 15L33 30" stroke="#8d1010" strokeWidth="4" />
        <Node x={37} y={9} /><Node x={12} y={38} />
      </Ico>
    </Slot>
    <Slot>
      <Ico>
        <path d="M3 10V17M43 10V17M4 14Q23 9 42 14" stroke="#3d6fa3" strokeWidth="3" fill="none" />
        <path d="M2 26Q24 18 46 26V40Q24 32 2 40Z" fill="#d5d5d5" stroke="#888" />
        <path d="M8 24V31M14 23V28M20 22V31M26 22V28M32 22.500V31M38 24V29" stroke="#222" strokeWidth="1.800" />
      </Ico>
    </Slot>
    <Slot>
      <Ico>
        <text x="24" y="22" textAnchor="middle" fontSize="19" fontFamily="DejaVu Sans, sans-serif" fontWeight="700" fill="#000">123</text>
        <path d="M8 35Q24 26 40 35" stroke="#06121e" strokeWidth="5" fill="none" />
        <path d="M8 35Q24 26 40 35" stroke="#2a86c8" strokeWidth="2.800" fill="none" />
        <Node x={7} y={36} /><Node x={40} y={36} />
      </Ico>
    </Slot>
    <Menu>
      <Ico>
        <path d="M6 4Q12 1 20 4Q28 6 36 4Q46 2 44 16Q42 26 32 24Q24 20 17 23Q2 26 3 12Q3 7 6 4Z" fill="#2780be" stroke="#000" strokeWidth="2" />
        <path d="M34 27Q45 25 43 38L36 36Z" fill="#eee" stroke="#000" />
        <path d="M18 26Q24 23 28 29Q32 33 38 34Q44 38 41 45Q36 48 32 41Q28 37 22 37Q14 33 18 26Z" fill="#ee2b2b" stroke="#000" strokeWidth="1.800" />
      </Ico>
    </Menu>
    <Slot>
      <Ico off>
        <text x="3" y="15" fontSize="17" fontFamily="DejaVu Sans, sans-serif" fill="#aaa">Az</text>
        <text x="3" y="31" fontSize="17" fontFamily="DejaVu Sans, sans-serif" fill="#aaa">d</text>
        <path d="M12 36L38 10" stroke="#666" strokeWidth="2" />
        <circle cx="38" cy="10" r="5" fill="#776" /><circle cx="11" cy="40" r="5" fill="#999" />
        <g opacity=".45"><Star x={26} y={27} /></g>
      </Ico>
    </Slot>
    <Slot>
      <Ico off>
        <path d="M8 12H38L12 36" stroke="#666" strokeWidth="2" fill="none" />
        <circle cx="8" cy="12" r="5" fill="#776" /><circle cx="38" cy="10" r="5" fill="#776" /><circle cx="11" cy="40" r="5" fill="#999" />
        <g opacity=".45"><Star x={26} y={27} /></g>
      </Ico>
    </Slot>
  </div>
);

/* ------------------------------------------------------------------ */
/* Map canvas                                                          */
/* ------------------------------------------------------------------ */

const SHEETS: Record<string, [number, number, number, number]> = {
  A: [536, 290, 620 / 1568, 720 / 1568],
  B: [1140, 290, 600 / 1568, 720 / 1568],
  C: [640, 980, 560 / 1568, 640 / 1568],
  D: [1140, 980, 600 / 1568, 720 / 1568],
};

type Pt = [number, number];

const parse = (s: string): Pt[] => {
  let t = SHEETS.A;
  const out: Pt[] = [];
  for (const tok of s.trim().split(/\s+/)) {
    if (SHEETS[tok]) t = SHEETS[tok];
    else {
      const [x, y] = tok.split(",").map(Number);
      out.push([+(t[0] + x * t[2]).toFixed(1), +(t[1] + y * t[3]).toFixed(1)]);
    }
  }
  return out;
};

const poly = (s: string) => "M" + parse(s).map((p) => p.join(" ")).join("L");

const smooth = (s: string) => {
  const p = parse(s);
  let d = `M${p[0].join(" ")}`;
  for (let i = 1; i < p.length - 1; i++) {
    d += `Q${p[i][0]} ${p[i][1]} ${(p[i][0] + p[i + 1][0]) / 2} ${(p[i][1] + p[i + 1][1]) / 2}`;
  }
  return d + `L${p[p.length - 1].join(" ")}`;
};

const EAST =
  "B 500,0 520,12 540,25 556,25 558,14 575,12 592,14 596,24 630,20 655,22 692,58 712,50 765,69 832,55 862,92 876,100 880,125 886,145 828,160 824,178 800,180 757,208 735,255 715,300 700,345 685,380 676,430 667,498 715,515 730,535 726,555 742,583 757,598 770,630 780,665 784,700 786,765 803,803 815,820 815,850 793,895 790,930 785,1000 775,1070 767,1120 775,1160 780,1205 795,1215 825,1218 830,1290 838,1355 855,1372 840,1385 828,1405 830,1435 858,1455 853,1490 860,1520 850,1535 D 853,45 862,65 880,75 870,92 830,117 800,118 785,130 745,140 725,170 718,200 722,240 735,290 740,330 750,370 762,380 765,420 785,450 800,480 825,515 850,525 870,535 920,548 990,570 1050,572 1088,588 1075,625 1090,665 1115,680 1140,720 1165,785 1174,830 1163,860 1155,930 1140,1000 1142,1060 1148,1130 1165,1200 1195,1260 1198,1315 1245,1325 1280,1350 1290,1400 1305,1460 1350,1495 1388,1512 1418,1545";
const SOUTH = "D 1088,1545 1060,1515 1040,1475 1010,1445 960,1410 910,1385 880,1355 830,1330 780,1312 720,1305 640,1315 590,1335 540,1358 505,1385";
const SOUTHWEST =
  "D 505,1385 480,1394 440,1388 400,1375 365,1350 300,1330 250,1305 200,1275 140,1240 80,1200 0,1168 C 1510,1375 1430,1325 1350,1285 1240,1228 1215,1215 1190,1192 1160,1185 1120,1160 1080,1120 1050,1105 1020,1095 960,1050";
const WEST =
  "C 960,1050 920,1020 880,985 860,975 845,985 820,962 780,930 720,870 660,805 620,768 590,745 560,705 535,675 500,635 472,612 472,600 457,595 457,570 440,550 440,535 410,500 395,465 378,435 372,405 355,385 335,362 335,350 318,318 333,305 325,280 300,235 275,195 255,135 225,80 197,30 193,0 A 438,1500 425,1470 405,1440 385,1410 360,1370 340,1335 300,1280 260,1220 200,1160 150,1110 100,1060 50,1015 0,982";
const LAND = `A 0,0 ${EAST} ${SOUTH} ${SOUTHWEST} ${WEST}`;

const FOREST = `C 955,1010 1020,900 1100,780 1200,650 1240,611 1325,608 1418,612 1443,655 1450,728 1545,708 D 210,635 268,670 272,612 312,610 270,548 160,505 62,512 -10,462 10,431 95,425 158,462 212,463 270,490 330,525 355,568 360,605 378,640 392,687 338,724 345,800 370,893 445,960 483,1037 555,1088 692,1130 796,1177 856,1138 820,1105 782,1030 705,920 632,893 557,832 520,770 516,700 540,655 570,625 630,615 672,598 740,625 800,670 804,709 745,702 805,770 868,835 960,810 1000,860 1018,885 1070,890 1105,910 1108,960 1100,1060 1095,1100 1110,1190 1085,1190 1078,1205 1100,1240 1120,1270 1160,1305 1165,1340 1100,1365 1010,1370 960,1350 870,1315 800,1295 720,1290 650,1286 600,1290 550,1335 ${SOUTHWEST}`;

const WOODS = [
  "D 1190,1370 1255,1365 1262,1410 1290,1412 1302,1455 1350,1495 1390,1520 1418,1545 1095,1545 1085,1500 1110,1480 1150,1490 1175,1465 1130,1445 1185,1420",
  "D 1050,1372 1140,1366 1125,1400 1080,1412 1040,1398",
  "D 960,1360 1020,1375 1040,1395 1000,1405 950,1385",
];
const MEADOWS = [
  "A 190,888 225,905 215,925 180,928", "A 180,1110 192,1103 203,1118 190,1127", "A 700,1325 742,1325 738,1340 698,1342",
  "A 815,1305 870,1305 850,1318 862,1340 845,1348 838,1325", "A 1018,1288 1038,1288 1035,1300 1018,1298",
  "A 732,1375 772,1382 770,1395 745,1392", "A 870,1475 910,1460 918,1468 880,1480",
];

const RED =
  "A -10,962 50,1010 100,1050 145,1080 170,1080 225,1108 245,1150 290,1200 315,1250 340,1258 380,1257 415,1266 490,1268 520,1282 590,1308 660,1338 710,1360 750,1410 785,1448 830,1460 880,1470 975,1500 1040,1527 1110,1560 C 990,92 1060,112 1130,145 1200,210 1270,255 1330,300 1390,350 1440,375 D 135,362 180,390 240,445 330,515 430,570 520,600 565,611 630,614 680,652 760,687 850,697 890,705 930,730 975,750 995,800 1010,850 1060,880 1108,905 1113,980 1115,1055 1102,1095 1115,1150 1127,1255 1170,1310 1183,1350 1183,1398";
const YELLOW = [
  "A 340,-5 385,60 420,145 390,230 365,310 315,425 345,510",
  "A 345,510 310,530 285,545 278,610 295,690 333,770 325,800 300,840 285,900 230,980 190,1030 170,1078",
];
const MAJOR = [
  "A 1145,0 1085,65 1060,130 1025,190 990,235 942,265 950,305 915,380 860,460 830,508 780,550 720,590 650,630 610,665 570,682 515,725 490,790 460,820 390,858 345,880 290,892",
  "A 660,1338 680,1325 770,1312 795,1300 850,1292 890,1303 970,1310 1060,1302 1250,1300 1320,1308 1400,1335 1430,1355 1500,1358 B 0,1365 60,1372 140,1377 240,1372 330,1366 412,1342",
  "B 222,-5 250,45 275,85 310,145 370,200 410,235 370,265 385,310 420,355 432,430 425,490 437,600 442,700 440,800 425,890 395,915 380,1000 382,1060 400,1120 422,1195 398,1250 415,1290 412,1345 430,1440 437,1530 D 430,100 430,180 452,270 500,335 600,435 595,520 558,570 562,605",
];
const MINOR = [
  "B 725,835 745,900 730,960 690,985 668,1010 675,1050",
  "D 60,1152 85,1172 140,1185 190,1220 200,1255 300,1322 380,1345 500,1350 560,1325 600,1288 650,1285 750,1298 800,1300 870,1318 950,1355 1030,1372 1110,1362 1170,1335",
  "D 1190,1380 1180,1465 1300,1457", "D 1180,1465 1170,1500 1090,1520",
  "D 1300,1457 1385,1510 1330,1535", "D 980,930 985,912 1020,905 1015,860",
];
const LANES = [
  "B -10,130 100,185 190,232 290,260 400,240", "B 280,85 320,50 350,45 390,15 450,5",
  "B 500,0 570,60 618,140 600,190 600,310 632,370 610,420 560,465 530,480 490,548 440,555",
  "B 290,110 380,130 470,160 610,152", "B 600,290 680,290 712,298", "B 610,325 690,340", "B 620,390 680,397",
  "B 610,425 670,422", "B 560,465 670,463", "B 0,608 130,598 320,578 330,545 385,490",
  "B -10,368 60,335 245,320 265,290 290,260", "B 200,235 245,300", "B 160,335 165,345 205,348 205,325",
  "B 400,330 435,315 520,335 600,312", "B 460,325 480,370 525,418", "B 420,290 450,262 B 425,290 440,315",
  "B 345,475 370,490 440,490 455,490", "B 375,460 375,510 390,540", "B 430,590 475,595 B 460,555 470,590",
  "B 450,700 470,640 B 445,670 475,670",
  "B 570,872 650,855 725,835 800,810", "B 480,1020 590,1055 640,1070 675,1050 720,1038 780,1035", "B 755,1035 758,1000 785,985",
  "B 460,920 500,900 520,855", "B 850,1362 730,1380 660,1410 550,1440 560,1475 530,1525 440,1527", "B 450,800 478,800 475,830 430,900",
  "B 320,1020 350,1030 470,1037 545,1048 480,1057 360,1052", "B 360,985 440,985", "B 365,1000 440,1005", "B 360,1018 440,1020",
  "B 375,1100 450,1090", "B 385,1130 400,1140", "B 400,1080 430,1155", "B 468,920 465,980 440,1030 470,1100",
  "B 360,980 375,1000", "B 370,1070 415,1070", "B 440,1090 460,1130",
  "A 200,0 270,60 300,140 340,180 390,220", "A -10,185 60,140 180,65 250,42", "A 385,60 460,42 575,75 600,40 670,5",
  "A 575,75 540,130 520,185 390,240", "A 455,200 520,260", "A 50,300 150,350 210,400 245,460 280,530",
  "A 830,508 900,508 1050,540 1220,590 1420,600 1568,608", "A 920,380 1050,535", "A 990,235 1060,247 1120,245 1190,210 1310,205",
  "A 1030,195 1095,245", "A 1335,0 1310,100 1315,300 1308,460 1345,510 1345,590", "A 1340,10 1400,30 1460,90 1568,150",
  "A 1335,35 1400,60 1395,30", "A 1315,150 1460,150 1500,125", "A 1315,265 1370,270 1378,310 1365,410 1400,420 1315,460", "A 1315,320 1375,310",
  "A 1310,385 1365,390", "A 1400,420 1420,480 1425,600", "A 1400,420 1500,390 1568,340", "A 1345,510 1415,470",
  "A 1345,590 1270,597 1280,565 1425,555", "A 1155,575 1215,628 1365,620 1430,615", "A 1215,628 1220,590", "A 1305,595 1310,618", "A 330,780 400,850",
  "A 107,815 120,890 210,980", "A 0,940 60,955 160,1040", "A 20,980 60,955", "A 40,1000 80,970", "A 60,1020 110,985", "A 90,1035 150,990",
  "A 110,920 200,1000", "A 85,965 190,1050", "A 100,960 150,930", "A 120,990 180,940 240,900 290,880", "A 150,1030 230,960", "A 290,880 310,850 340,875",
  "A 290,900 320,945", "A 260,900 300,930", "A 150,1085 200,1150", "A 175,1080 240,1150", "A 160,1100 260,1210", "A 190,1090 270,1180 300,1230",
  "A 200,1150 245,1110", "A 225,1180 260,1150", "A 200,1090 215,1075 250,1080 255,1100", "A 1290,1225 1310,1250 1330,1308", "A 1310,1250 1350,1232 1390,1250", "A 1345,1250 1355,1280 1345,1300",
  "A 320,1260 345,1290 400,1330 460,1410 495,1440 515,1500 C 288,20 300,70 350,125 375,200 410,280 440,335 500,385 540,450 560,498",
  "A 345,1290 375,1285 360,1255", "A 785,1450 798,1500 C 592,20 595,50 620,95 700,145 800,215 870,250 900,310 955,350 970,390 1020,440 1120,465 1220,530 1300,568 1470,598 1520,650 D 100,575 180,617 230,615 330,588 410,597 515,598",
  "C 1030,480 1040,550 1068,620 1065,660 1035,720 1010,738 950,745 915,790 900,870 880,905 830,950", "C 880,905 885,970 905,1000 935,1015",
  "D 718,170 700,210 700,260 680,310 660,320 675,370 700,470 730,560 760,630 820,685 850,700",
  "D 835,690 935,675 975,745", "D 860,700 885,750", "D 890,690 930,715 970,700", "D 910,680 960,750", "D 930,715 1000,690 1060,645", "D 840,695 900,740",
  "D 1020,820 1040,860 1010,870", "D 1000,830 1050,830", "D 1005,845 1055,850", "D 1130,950 1120,1000 1130,1100 1145,1200 1190,1265",
  "D 1115,1000 1130,1200", "D 1100,1365 1290,1355", "D 1255,1360 1262,1410 1285,1410 1280,1350",
  "D 560,1330 640,1290 630,1310", "D 700,1310 705,1290", "D 760,1285 750,1310", "D 780,1310 785,1298", "D 845,1330 855,1310",
  "D 900,1360 960,1410 1080,1440", "D 920,1390 940,1350", "D 940,1400 970,1360", "D 960,1385 1000,1420", "D 990,1430 1030,1390", "D 1020,1445 1060,1405",
  "D 1050,1395 1070,1380 1085,1390 1075,1415 1050,1395", "D 1060,1480 1130,1420", "D 1050,1465 1090,1530", "D 1090,1400 1183,1385", "D 1130,1390 1170,1400", "D 1150,1375 1150,1400",
];
const TRACKS = [
  "A 45,578 120,535 210,520 270,515", "A 270,352 345,350", "A 340,545 385,640 460,705 470,738 495,738", "A 345,520 440,512",
  "A 400,850 450,905 600,1000 755,1160 800,1250 820,1300", "A 730,590 735,615 800,695 890,735 920,810 980,865 1040,860 1035,815 1070,800 1080,740 1115,700 1220,630",
  "A 1020,485 1060,470 1300,450", "A 1100,250 1130,335 1180,405 1270,510 1280,565", "A 1180,405 1230,375 1310,378",
  "A 1360,625 1340,710 1350,800 1375,835 1400,835", "A 1040,860 1010,905 945,945 940,1010 905,1022", "A 180,0 215,65 270,110 290,150", "B 520,850 560,865 555,885",
  "D 1230,1460 1240,1542", "D 1140,1500 1170,1540",
];

const WEST_TRACK =
  "A 268,10 315,30 290,49 315,69 315,89 315,108 337,128 337,167 315,188 291,209 291,229 291,248 291,268 268,288 268,307 291,327 268,346 244,366 268,385 268,405 268,425 291,444 291,464 291,485 337,505 313,524 337,544 337,563 430,583 430,603 475,623 498,642 544,661 567,681 567,701 314,1098 360,1214 314,1234 314,1254 314,1273 314,1293 337,1313 337,1332 360,1352 360,1371 382,1392 382,1412 405,1432 430,1452 453,1471 475,1490 498,1511 657,1530 C 437,52 437,98 437,120 462,142 513,163 565,185 590,210 615,232 667,254 640,276 742,298 793,320 868,342 918,364 893,386 918,408 997,431 1022,453 1022,475 1073,497 1098,519 1123,541 1148,565 1173,587 1224,609 1198,631 1224,653 1249,676 1249,698 1249,720 1249,742 1275,765 1275,786 1275,808 1275,830 1275,852 1275,875 1249,898 1249,920 1224,942 1224,965 1173,987 1123,1009 1098,1031 1073,1053 1047,1075 1022,1097 997,1119 1022,1141";
const EAST_TRACK =
  "B 191,10 191,29 214,49 238,69 238,89 238,108 238,128 262,148 262,167 286,188 310,209 310,229 335,248 335,268 335,288 358,307 358,327 358,346 381,366 381,385 381,405 381,425 405,444 405,464 405,484 405,504 405,524 405,543 405,563 405,583 405,603 405,623 405,642 405,662 405,681 405,701 428,720 428,740 428,760 428,779 428,801 428,820 428,840 404,860 428,879 428,899 452,918 428,938 428,958 428,978 428,998 428,1017 476,1037 452,1057 452,1076 476,1097 476,1116 499,1136 499,1156 499,1175 522,1195 546,1215 546,1235 569,1254 569,1274 593,1293 593,1313 593,1333 593,1352 593,1371 593,1391 593,1412 616,1432 616,1451 616,1471 640,1491 616,1511 616,1530 640,1550 D 616,67 616,87 616,106 593,125 569,146 522,166 452,187 452,207 499,226 499,246 522,266 569,285 995,640 995,660 1019,679 1019,699 1019,718 1019,738 1019,757 1019,777 995,800 995,818 971,838 995,858";

const LABELS: [string, string, number][] = [
  ["A 1111,165", "Dwi Tiro", 102], ["A 68,296", "amalanrea", 126], ["A 836,558", "Buhung Bundang", 220], ["A 664,883", "Caramming", 146],
  ["A 1189,871", "Pakubalaho", 146], ["A 158,1029", "Tanah Beru", 142], ["A 1442,1268", "Lembanna", 131], ["B 40,459", "Ekatiro", 90],
  ["B 140,930", "Tritiro", 78], ["B 381,1033", "Ara", 42], ["C 290,633", "Tanah Lemo", 184], ["C 1190,1023", "Darubiah", 138], ["C 1236,188", "A R A", 76],
];

const Tree = ({ x, y, f }: { x: number; y: number; f?: boolean }) => (
  <g transform={`translate(${x} ${y}) scale(${f ? -1 : 1} 1)`} fill="none" stroke="#8db683" strokeWidth="1">
    <circle cx="-2.500" cy="-2" r="2" />
    <path d="M-2.500 0V4M2.500 -4L0 2H5ZM2.500 2V4" />
  </g>
);

const MapCanvas = () => {
  const west = parse(WEST_TRACK);
  const east = parse(EAST_TRACK);
  const stray = parse("A 290,148 C 487,75");
  const line = (s: string, i: number, c: string, w: number) => (
    <path key={i} d={smooth(s)} stroke={c} strokeWidth={w} />
  );
  return (
    <svg viewBox="536 292 1202 1396" width="1202" height="1396" className="block font-['Noto_Sans','Open_Sans',sans-serif]">
      <defs>
        <pattern id="wood" width="107" height="104" patternUnits="userSpaceOnUse">
          <Tree x={12} y={12} /><Tree x={42} y={24} f /><Tree x={72} y={8} /><Tree x={96} y={34} f />
          <Tree x={20} y={48} f /><Tree x={60} y={54} /><Tree x={90} y={66} /><Tree x={10} y={82} />
          <Tree x={40} y={88} f /><Tree x={72} y={92} f />
        </pattern>
        <path id="border1" d={poly("C 570,706 640,786 700,846 800,932")} />
        <path id="border2" d={poly("D 16,1163 60,1193 120,1224 180,1258 285,1318")} />
      </defs>
      <rect x="536" y="292" width="1202" height="1396" fill="#abd2df" />
      <path d={poly(LAND) + "Z"} fill="#f2efe8" />
      <path d={poly(FOREST) + "Z"} fill="#add19e" />
      <path d={poly(FOREST) + "Z"} fill="url(#wood)" />
      {WOODS.map((s, i) => <path key={i} d={poly(s) + "Z"} fill="#add19e" />)}
      {MEADOWS.map((s, i) => <path key={i} d={poly(s) + "Z"} fill="#cdebb0" />)}
      <path d={poly("A 762,1400 780,1403 775,1418 760,1413") + "Z"} fill="#a5d3a0" />
      <path d={poly("A 0,962 60,950 150,1000 200,1060 250,1120 290,1190 310,1240 260,1200 150,1100") + "Z"} fill="#e6dfdc" opacity=".5" />
      <path d={poly("D 900,1375 960,1350 1040,1400 1180,1340 1210,1320 1280,1355 1185,1400 1130,1470 1085,1535 1040,1470") + "Z"} fill="#e8e2de" opacity=".6" />
      {[EAST, SOUTHWEST, WEST].map((s, i) => (
        <g key={i} fill="none">
          <path d={poly(s)} stroke="#c9bfcf" strokeWidth="2.500" />
          <path d={poly(s)} stroke="#9c90b4" strokeWidth="1.600" strokeDasharray="14 3 4 3" />
        </g>
      ))}
      <path d={poly(SOUTH)} stroke="#f0dcb0" strokeWidth="2.500" fill="none" />
      <g fill="none" strokeLinejoin="round" strokeLinecap="round">
        <g strokeDasharray="4 2 1.500 2">{TRACKS.map((s, i) => line(s, i, "#bfa684", 1))}</g>
        {LANES.map((s, i) => line(s, i, "#c4c2c2", 2.900))}
        {LANES.map((s, i) => line(s, i, "#ffffff", 1.500))}
        {MINOR.map((s, i) => line(s, i, "#c6c4c0", 3.800))}
        {MINOR.map((s, i) => line(s, i, "#ffffff", 2.700))}
        {MAJOR.map((s, i) => line(s, i, "#b3b3b3", 5))}
        {MAJOR.map((s, i) => line(s, i, "#ffffff", 3.400))}
        {YELLOW.map((s, i) => line(s, i, "#b4be78", 5))}
        {YELLOW.map((s, i) => line(s, i, "#f6f9b4", 3.400))}
        {line("D 1183,1398 1120,1430 1040,1466", 0, "#d8a45c", 5)}
        {line("D 1183,1398 1120,1430 1040,1466", 1, "#fcd6a4", 3.600)}
        {line(RED, 0, "#dc8c78", 6.200)}
        {line(RED, 1, "#f9b29c", 4.600)}
        {line("A 272,1370 280,1355 325,1328", 1, "#a3aaa9", 1)}
        {line("A 285,1408 345,1372", 1, "#dfe4e4", 2.500)}
        {line("A 268,1425 275,1440 305,1450 390,1428", 1, "#9aa3a3", 1)}
        <path d={poly("D 1195,1265 1275,1255 1308,1312")} stroke="#c3c8c8" strokeWidth="1.600" />
        <path d={poly("D 1310,1330 1280,1356")} stroke="#9aa3a3" strokeWidth="1.600" />
        <g stroke="#6f86d6" strokeWidth="1.200" strokeDasharray="5 4">
          <path d={poly("D 1240,1260 1262,1305 1310,1322 1566,1328")} />
          <path d={poly("D 1310,1322 1440,1380 1566,1440")} />
          <path d={poly("D 1310,1322 1430,1390 1566,1470")} />
          <path d={poly("D 1310,1322 1400,1380 1510,1445 1566,1515")} />
        </g>
      </g>

      <g textAnchor="middle" stroke="#fff" strokeOpacity=".7" strokeWidth="2.500" strokeLinejoin="round" style={{ paintOrder: "stroke" }}>
        {LABELS.map(([p, t, w]) => {
          const [x, y] = parse(p)[0];
          const k = SHEETS[p[0]][2] * (p[0] === "C" ? 0.92 : 1);
          return (
            <text key={t} x={x} y={y + 4} fontSize="11.500" fill="#6c6c6c" textLength={w * k} lengthAdjust="spacingAndGlyphs">{t}</text>
          );
        })}
        <text x="1265" y="930" fontSize="9.500" fill="#8a5a3a" textLength="60" lengthAdjust="spacingAndGlyphs">Bulu Pasoaruna</text>
        <text x="1502" y="1534" fontSize="9.500" fill="#8a5a3a" textLength="36" lengthAdjust="spacingAndGlyphs">Moncong</text>
        <text x="1502" y="1543" fontSize="9.500" fill="#8a5a3a" textLength="27" lengthAdjust="spacingAndGlyphs">Bulung</text>
        <g fill="#2f8be0" fontSize="9.500">
          <text x="1404" y="1597" textLength="24" lengthAdjust="spacingAndGlyphs">Pantai</text>
          <text x="1404" y="1607" textLength="40" lengthAdjust="spacingAndGlyphs">Bara (Bara</text>
          <text x="1404" y="1616" textLength="26" lengthAdjust="spacingAndGlyphs">beach)</text>
        </g>
        <text x="1546" y="1643" fontSize="12.500" fill="#666" textLength="19" lengthAdjust="spacingAndGlyphs">Bira</text>
      </g>
      <g fontSize="9" fontStyle="italic" fill="#7d5f8c" letterSpacing="-0.250">
        <text><textPath href="#border1">Kabupaten Kepulauan Selayar</textPath></text>
        <text><textPath href="#border2">Kabupaten Kepulauan Selayar</textPath></text>
      </g>
      <path d="M1265 914L1269 920H1261Z" fill="#c77c42" />
      <path d="M1501 1517L1505 1523H1497Z" fill="#c77c42" />
      <path d="M1404 1576L1411 1580V1582H1397V1580ZM1399 1583H1409V1588H1399Z" fill="#1f8fd0" />

      <g fill="#8a5a98" stroke="#231a26" strokeWidth="1.200">
        {[...west, ...east, ...stray].map(([x, y], i) => <circle key={i} cx={x} cy={y} r="6" />)}
      </g>
      <g fill="none" stroke="#fdbf6f" strokeWidth="3.800" strokeLinejoin="bevel">
        <path d={"M" + west.join("L")} />
        <path d={"M" + east.join("L")} />
      </g>
    </svg>
  );
};

/* ------------------------------------------------------------------ */
/* Side panels                                                         */
/* ------------------------------------------------------------------ */

const DockButtons = () => (
  <div className="flex gap-1.5">
    <svg width="22" height="22" viewBox="0 0 22 22" fill="none" stroke="#8c8c8c" strokeWidth="1.800">
      <rect x="1" y="1" width="20" height="20" rx="3" />
      <path d="M9 9V5H17V13H13M5 9H13V17H5Z" />
    </svg>
    <svg width="22" height="22" viewBox="0 0 22 22" fill="none" stroke="#8c8c8c" strokeWidth="1.800">
      <rect x="1" y="1" width="20" height="20" rx="3" />
      <path d="M5 5L17 17M17 5L5 17" strokeWidth="3.200" />
    </svg>
  </div>
);

const Check = ({ on, fill = "" }: { on?: boolean; fill?: string }) => (
  <span className={`flex h-7 w-7 shrink-0 items-center justify-center border-2 border-[#272727] ${fill}`}>
    {on && (
      <svg width="18" height="20" viewBox="0 0 18 20"><path d="M1.500 11L6.500 17.500L16 1.500" stroke="#c9c9c9" strokeWidth="2.600" fill="none" /></svg>
    )}
  </span>
);

const Twisty = ({ open, show }: { open?: boolean; show?: boolean }) => (
  <span className="flex w-[20px] shrink-0 justify-center">
    {show &&
      (open ? (
        <svg width="16" height="9" viewBox="0 0 16 9"><path d="M0 0H16L8 9Z" fill="#adadad" /></svg>
      ) : (
        <svg width="8" height="16" viewBox="0 0 8 16"><path d="M0 0V16L8 8Z" fill="#adadad" /></svg>
      ))}
  </span>
);

type Layer = { name: string; on?: boolean; line?: string; w?: number; dot?: string; r?: number; raster?: boolean; points?: boolean; open?: boolean };

const Sym = ({ l }: { l: Layer }) => (
  <svg width="32" height="32" viewBox="0 0 32 32" className="shrink-0">
    {l.line && <path d="M0 16H32" stroke={l.line} strokeWidth={l.w} />}
    {l.dot && <circle cx={l.r === 6 ? 15 : 16} cy="16" r={l.r ?? 8.500} fill={l.dot} />}
    {l.r === 6 && <circle cx="15" cy="16" r="3" fill="#4f80bd" />}
    {l.points && (
      <g fill="#eee" stroke="#777" strokeWidth="2">
        <circle cx="7" cy="25" r="2.500" /><circle cx="11" cy="11" r="2.500" /><circle cx="25" cy="5" r="2.500" />
      </g>
    )}
    {l.raster && (
      <g>
        <rect x="4" y="3" width="26" height="26" fill="#34465f" />
        <path d="M13 3H21V12H13ZM4 12H13V21H4ZM21 12H30V21H21ZM13 21H21V29H13Z" fill="#b3cbe8" />
      </g>
    )}
  </svg>
);

const TreeRow = ({ l, selected }: { l: Layer; selected?: boolean }) => (
  <div className={`flex h-9 items-center pl-[10px] ${selected ? "bg-[#454545]" : ""}`}>
    <Twisty show={l.open} open />
    <span className="ml-[16px] flex"><Check on={l.on} fill={selected ? "bg-[#1e1e1e]" : ""} /></span>
    <span className="ml-3 flex"><Sym l={l} /></span>
    <span
      className={`ml-[13px] text-[25px] leading-9 font-bold ${
        selected
          ? "tracking-[1.25px] text-white italic underline decoration-2 underline-offset-[5px]"
          : l.on
            ? "tracking-[0.7px] text-[#e2e2e2]"
            : "tracking-[0.95px] text-[#8e8e8e] italic"
      }`}
    >
      {l.name}
    </span>
    {selected && (
      <span className="mr-[9px] ml-auto flex h-8 w-8 items-center justify-center rounded bg-[#2b2b2b]">
        <svg width="24" height="24" viewBox="0 0 24 24"><path d="M3 4H21L14 12V21" stroke="#444" strokeWidth="1.500" fill="none" /><path d="M3 4L11 12V19" stroke="#333" strokeWidth="1.500" fill="none" /></svg>
      </span>
    )}
  </div>
);

const TOP_LAYERS: Layer[] = [
  { name: "5k-3000-0", on: true, line: "#eda75c", w: 3.500 },
  { name: "merged-10000-0", line: "#ee9aa6", w: 5 },
  { name: "merged-5000-0", line: "#c9a23a", w: 2.500 },
  { name: "path_5km", line: "#9a7fb8", w: 2 },
  { name: "merged", dot: "#2f5486", r: 6 },
  { name: "5km", on: true, dot: "#8d5a99" },
  { name: "10km", dot: "#ff9e17" },
];

const CLASSES: [string, string, boolean?][] = [
  ["0", "#d665b0"], ["1", "#7c7fd6"], ["2", "#b352ea"], ["3", "#4aedb4"], ["252", "#c99d52"],
  ["253", "#30d430"], ["254", "#5ec0ea"], ["255", "#e66d6f", true], ["", "#b1df57"],
];

const BANDS: [string, string][] = [["Band 1 (Red)", "#ff0000"], ["Band 2 (Green)", "#00ff00"], ["Band 3 (Blue)", "#0000ff"]];

const Tool = ({ children }: Kids) => <div className="relative flex w-[50px] shrink-0 justify-center">{children}</div>;
const Mini = () => <span className="absolute right-[3px] bottom-[-1px]"><Down small /></span>;

const Expand = ({ up }: { up?: boolean }) => (
  <Ico size={30}>
    <path d="M3 5H44M7 5V42M7 18H20M7 38H20" stroke="#9a9a9a" strokeWidth="3" fill="none" />
    <rect x="13" y="13" width="10" height="10" fill="#ffa51f" stroke="#c77400" />
    <rect x="13" y="33" width="10" height="10" fill="#ffa51f" stroke="#c77400" />
    {up ? <path d="M34 1L47 17H39V42H29V17H21Z" fill="#6d98d0" stroke="#2b5288" strokeWidth="2" /> : <path d="M34 45L47 29H39V3H29V29H21Z" fill="#6d98d0" stroke="#2b5288" strokeWidth="2" />}
  </Ico>
);

const LayersPanel = () => (
  <div className="flex w-[520px] shrink-0 flex-col">
    <div className="flex h-[42px] items-center justify-between pr-[4px] pl-[6px]">
      <span className="text-[22px] tracking-[0.1px] text-[#e0e0e0]">Layers</span>
      <DockButtons />
    </div>
    <div className="flex h-[60px] items-center border-b-2 border-[#292929] pb-[2px] pl-[5px]">
      <Tool>
        <Ico size={32}>
          <path d="M4 16L24 6L32 30L10 44Z" fill="#c8382f" />
          <path d="M6 10L22 3L30 18L10 26Z" fill="#f1d63c" />
          <path d="M3 20L24 14L28 24L6 32Z" fill="#5f93cf" />
          <path d="M16 24L30 16L36 24L26 44L10 40Z" fill="#e6bd7a" stroke="#8f6420" strokeWidth="1.500" />
          <path d="M32 18L44 4" stroke="#d89a3c" strokeWidth="5" strokeLinecap="round" />
        </Ico>
      </Tool>
      <Tool>
        <Ico size={32}>
          <path d="M2 26V46H20" stroke="#999" strokeWidth="2.500" fill="none" />
          <rect x="6" y="14" width="26" height="26" fill="#ddd" stroke="#888" strokeWidth="2" />
          <rect x="14" y="5" width="28" height="28" fill="#e8e8e8" stroke="#888" strokeWidth="2" />
          <path d="M22 14V28Q26 32 30 28V4Q26 -2 24 4V20" stroke="#3d6798" strokeWidth="2.600" fill="none" />
          <Plus x={28} y={30} s={18} />
        </Ico>
      </Tool>
      <Tool>
        <Ico size={36}>
          <path d="M1 24Q20 4 46 22Q28 42 1 24Z" fill="#e9eef3" stroke="#555" />
          <path d="M2 13Q22 1 42 12" stroke="#777" strokeWidth="2.500" fill="none" />
          <circle cx="23" cy="23" r="10" fill="#6d98d0" />
          <circle cx="23" cy="22" r="4.500" fill="#0d1a2a" />
        </Ico>
        <Mini />
      </Tool>
      <Tool>
        <Ico size={32}>
          <path d="M2 8H42L27 25V46L18 40V25Z" fill="#6d98d0" stroke="#34618f" />
          <path d="M2 2H42V9H2Z" fill="#f7e65a" />
          <path d="M8 11L21 25V38" stroke="#b9d3f0" strokeWidth="3" fill="none" />
        </Ico>
        <Mini />
      </Tool>
      <Tool>
        <Ico size={32}>
          <text x="0" y="29" fontSize="64" fontFamily="Liberation Serif, serif" fill="#5f3f6c">ε</text>
          <path d="M24 24H46V48H24Z" fill="#999" />
          <path d="M26 28H44L37 36V46H33V36Z" fill="#eee" />
        </Ico>
      </Tool>
      <div className="flex w-6 justify-center"><Down /></div>
      <Tool><Expand /></Tool>
      <Tool><Expand up /></Tool>
      <Tool>
        <Ico size={30}>
          <rect x="4" y="2" width="34" height="36" fill="#efefef" stroke="#aaa" strokeWidth="1.500" />
          <rect x="29" y="30" width="17" height="15" rx="3" fill="#dc3b40" />
          <path d="M32 37.500H43" stroke="#fff" strokeWidth="3.500" />
        </Ico>
      </Tool>
    </div>
    <div className="flex h-[1243px] flex-col border-r-2 border-b-2 border-[#292929] bg-[#1e1e1e] pt-[1px]">
      {TOP_LAYERS.map((l) => <TreeRow key={l.name} l={l} />)}
      <TreeRow l={{ name: "rast_to_point", points: true, open: true }} selected />
      {CLASSES.map(([name, color, on]) => (
        <div key={color} className="flex h-10 items-center pl-[86px]">
          <Check on={on} />
          <svg width="20" height="20" viewBox="0 0 20 20" className="ml-5"><circle cx="10" cy="10" r="9.700" fill={color} /></svg>
          <span className="ml-[20px] text-[25px] leading-10 tracking-[0.3px] text-[#dedede]">{name}</span>
        </div>
      ))}
      <TreeRow l={{ name: "Sulawesi_digitized", raster: true, open: true }} />
      {BANDS.map(([name, color]) => (
        <div key={name} className="flex h-9 items-center gap-3 pl-[86px] text-[25px] tracking-[0.45px] text-[#dedede]">
          <svg width="32" height="32"><rect width="32" height="32" fill={color} /></svg>
          {name}
        </div>
      ))}
      <TreeRow l={{ name: "OSM Standard", raster: true, open: true, on: true }} />
    </div>
    <div className="flex items-start text-[25px] text-[#e0e0e0]">
      <div className="flex h-[53px] w-[126px] items-center justify-center rounded-b-[6px] border-2 border-t-0 border-[#505050] pt-[9px] tracking-[0.1px]">Layers</div>
      <div className="ml-[2px] flex h-[48px] w-[144px] items-center justify-center rounded-b-[6px] border-2 border-t-0 border-[#484848] bg-[#2b2b2b] pt-[9px]">Browser</div>
    </div>
  </div>
);

const QLogo = () => (
  <svg width="29" height="29" viewBox="0 0 29 29">
    <defs>
      <linearGradient id="qg" x1="0" y1="0" x2="0" y2="1"><stop offset="0" stopColor="#93b023" /><stop offset="1" stopColor="#589632" /></linearGradient>
    </defs>
    <path d="M14 .500A13.500 13.500 0 1 0 18.500 27.300L15.500 22A8.500 8.500 0 1 1 22.300 15L27.300 18A13.500 13.500 0 0 0 14 .500Z" fill="url(#qg)" />
    <path d="M16.500 18.500L19.500 15.500L28.500 23.500V28.500H24.500Z" fill="#76b043" />
    <path d="M12 9.500H16L19 12.500L15.500 16.500L12 13.500Z" fill="#ee7913" />
    <path d="M15.500 16.500L18.500 12.500L20.500 15.500L17 18.500Z" fill="#f7e64d" />
  </svg>
);

const GROUPS = [
  "Cartography", "Database", "File tools", "GPS", "Interpolation", "Layer tools", "Mesh", "Network analysis", "Plots",
  "Raster analysis", "Raster creation", "Raster terrain analysis", "Raster tools", "Vector analysis", "Vector creation",
  "Vector general", "Vector geometry", "Vector overlay", "Vector selection", "Vector table", "Vector tiles",
];

const SmallGear = () => <Gear size={32} hole="#333" />;

const RECENT: [string, React.ReactNode][] = [
  ["Nearest Points To Path", <SmallGear />],
  ["Geodesic point decimate", (
    <svg width="32" height="32" viewBox="0 0 32 32">
      <path d="M2 13H20M10 3L13 24" stroke="#d41111" strokeWidth="1.800" />
      <circle cx="27" cy="4" r="3.500" fill="#1f78b4" /><circle cx="4" cy="27" r="3.500" fill="#1f78b4" />
    </svg>
  )],
  ["Merge vector layers", (
    <svg width="32" height="32" viewBox="0 0 32 32" fill="#ececec" stroke="#666" strokeWidth="1.200">
      <rect x="2" y="13" width="16" height="16" /><rect x="7" y="8" width="16" height="16" /><rect x="13" y="2" width="16" height="16" />
    </svg>
  )],
  ["Raster pixels to points", <SmallGear />],
  ["Join attributes by location", <SmallGear />],
];

const PROVIDERS: [string, React.ReactNode][] = [
  ["GDAL", (
    <svg width="34" height="36" viewBox="-1 0 34 36" className="shrink-0">
      <circle cx="18" cy="19" r="12" fill="#7fc9f0" />
      <path d="M13 12Q18 6 24 10L22 16L18 18Z" fill="#4c9c58" />
      <path d="M18 20L24 22L22 28Z" fill="#3f8f4c" />
      <path d="M12 12L14 26" stroke="#b04a4a" strokeWidth="1.500" />
      <path d="M1 9L6 6L9 10L4 13ZM10 3L15 0L17 4L12 7Z" fill="#777" />
      <circle cx="9" cy="7" r="2.500" fill="#111" />
      <text x="1" y="32" fontSize="12.500" fontWeight="700" fontFamily="Liberation Sans, sans-serif" fill="#000" textLength="28" lengthAdjust="spacingAndGlyphs">GDAL</text>
    </svg>
  )],
  ["GRASS", (
    <svg width="32" height="32" viewBox="0 0 32 32">
      <path d="M16 2L28 14L16 28L4 14Z" fill="#141414" stroke="#000" strokeWidth="1.500" />
      <path d="M16 24L16 4M16 24L11 11M16 24L21 10M15 24L8 15M17 24L24 16" stroke="#0b7a17" strokeWidth="1.300" />
      <path d="M4 30H28" stroke="#000" strokeWidth="1.500" />
    </svg>
  )],
  ["ProcessX", (
    <svg width="32" height="32" viewBox="0 0 32 32">
      <path d="M11 4L25 28M27 4L12 26" stroke="#000" strokeWidth="3.500" />
      <path d="M12 10L16 4M5 30L6 23L14 18M26 15H29" stroke="#000" strokeWidth="2.500" fill="none" />
    </svg>
  )],
  ["Shape tools", (
    <svg width="32" height="34" viewBox="0 0 32 34">
      <path d="M16 4L20 12L29 13L22.500 19.500L24.500 30L16 26L7.500 30L9.500 19.500L3 13L12 12Z" fill="#0f76c6" stroke="#0f76c6" strokeWidth="5" strokeLinejoin="round" />
    </svg>
  )],
];

const ToolRow = ({ name, icon, open, child, selected }: { name: string; icon: React.ReactNode; open?: boolean; child?: boolean; selected?: boolean }) => (
  <div className={`flex h-9 shrink-0 items-center pl-[9px] ${selected ? "bg-[#454545] text-white" : "text-[#dedede]"}`}>
    <Twisty show={!child} open={open} />
    <span className={`flex w-8 shrink-0 justify-center ${child ? "ml-[57px]" : "ml-[17px]"}`}>{icon}</span>
    <span className={`ml-3 text-[25px] leading-9 whitespace-nowrap ${selected ? "tracking-[0.5px]" : child ? "tracking-[0.35px]" : "tracking-[0.22px]"}`}>{name}</span>
  </div>
);

const SearchIcon = () => (
  <svg width="26" height="26" viewBox="0 0 26 26" fill="none" stroke="#8f8f8f">
    <circle cx="11" cy="10.500" r="8.800" strokeWidth="2" />
    <path d="M17 17L25 24.500" strokeWidth="2.800" />
  </svg>
);

const Processing = () => (
  <div className="flex flex-1 flex-col">
    <div className="flex h-[42px] items-center justify-between pr-[2px] pl-[8px]">
      <span className="text-[22px] tracking-[0.15px] text-[#e0e0e0]">Processing Toolbox</span>
      <DockButtons />
    </div>
    <div className="flex h-[60px] items-center pb-[3px] pl-[6px]">
      <Tool>
        <svg width="34" height="34" viewBox="0 0 48 48" className="overflow-visible">
          <g transform="translate(-2 -4) scale(.68)"><Gear fill="#d81b1b" edge="#a80f0f" hole="#323232" /></g>
          <g transform="translate(24 10) scale(.5)"><Gear fill="#7a7a7a" edge="#5c5c5c" hole="#323232" /></g>
          <g transform="translate(10 28) scale(.42)"><Gear hole="#323232" /></g>
        </svg>
        <Mini />
      </Tool>
      <Tool><Python size={28} /><Mini /></Tool>
      <Tool><Clock size={33} ticks={false} /></Tool>
      <Tool>
        <svg width="24" height="30" viewBox="0 0 24 30">
          <path d="M1 1H16L23 8V29H1Z" fill="#fff" stroke="#aaa" />
          <path d="M16 1V8H23" fill="#ddd" stroke="#999" />
          <path d="M4 9H12M4 14H20M4 19H20M4 24H15" stroke="#333" strokeWidth="1.800" />
        </svg>
      </Tool>
      <span className="mr-[6px] ml-[7px] h-7 w-[2px] bg-[#2c2c2c]" />
      <Tool>
        <Ico size={30}>
          <Sq x={3} y={3} w={28} h={30} />
          <path d="M38 8L46 12L33 36L26 45L27 33Z" fill="#e6d23c" stroke="#665c12" strokeWidth="1.500" />
          <path d="M27 33L33 36L26 45Z" fill="#ddd" />
        </Ico>
      </Tool>
      <span className="mr-[5px] ml-[5px] h-7 w-[2px] bg-[#2c2c2c]" />
      <Tool>
        <Ico size={32}>
          <path d="M24 24L43 43" stroke="#8a7420" strokeWidth="8.500" strokeLinecap="round" />
          <path d="M24 24L43 43" stroke="#efd98a" strokeWidth="5.500" strokeLinecap="round" />
          <path d="M13 2Q23 3 21 13L27 21L22 26L14 20Q4 20 2 11L8 14L14 11Z" fill="#e6e6e6" stroke="#777" />
        </Ico>
      </Tool>
    </div>
    <div className="flex h-[47px] items-center gap-4 border-b-2 border-[#292929] bg-[#1e1e1e] pt-[2px] pl-4 text-[25px] tracking-[0.2px] text-[#8f8f8f] shadow-[0_0_0_1px_#282828]">
      <SearchIcon />
      Search...
    </div>
    <div className="mt-[2px] flex h-[1248px] flex-col border-l-2 border-[#2b2b2b] bg-[#1e1e1e]">
      <ToolRow name="Recently used" icon={<Clock size={33} ticks={false} />} open />
      {RECENT.map(([name, icon], i) => <ToolRow key={name} name={name} icon={icon} child selected={i === 0} />)}
      {GROUPS.map((name) => <ToolRow key={name} name={name} icon={<QLogo />} />)}
      {PROVIDERS.map(([name, icon]) => <ToolRow key={name} name={name} icon={icon} />)}
    </div>
  </div>
);

const Splitter = ({ cls }: { cls: string }) => (
  <div className={`flex shrink-0 flex-col items-center justify-center gap-[3px] pt-[10px] ${cls}`}>
    {Array.from({ length: 6 }, (_, i) => <span key={i} className="h-[3px] w-[4px] bg-[#777]" />)}
  </div>
);

/* ------------------------------------------------------------------ */
/* Status bar                                                          */
/* ------------------------------------------------------------------ */

const field = "flex items-center rounded-[4px] bg-[#1d1d1d] shadow-[0_0_0_2px_#292929]";

const StatusBar = () => (
  <div className="flex h-[60px] shrink-0 items-center pt-[7px] text-[22px] text-[#e2e2e2]">
    <div className={`${field} ml-[8px] h-[46px] w-[424px] shrink-0 gap-4 pl-[14px] text-[25px] tracking-[0.5px] text-[#8f8f8f]`}>
      <SearchIcon />
      <span>Type to locate (<span className="font-['DejaVu_Sans',sans-serif] text-[21px]">⌘</span>K)</span>
    </div>
    <span className="ml-[125px] w-[122px] shrink-0">Coordinate</span>
    <div className={`${field} h-[42px] w-[236px] shrink-0 justify-center tracking-[0.05px]`}>13402479,-616741</div>
    <svg width="30" height="34" viewBox="0 0 30 34" className="mr-[27px] ml-[12px] shrink-0">
      <path d="M4 3Q8 -1 12 5L18 16L12 20L6 12Z" fill="#f3f3f3" stroke="#000" strokeWidth="2" />
      <circle cx="18" cy="23" r="9" fill="#d8d8d8" stroke="#000" strokeWidth="2" />
      <path d="M8 4L14 17M14 3Q18 4 17 12" stroke="#000" strokeWidth="2.500" fill="none" />
      <circle cx="18" cy="24" r="3.500" fill="#fff" stroke="#000" strokeWidth="2.500" />
      <path d="M2 22L8 26M22 5L26 3" stroke="#000" strokeWidth="2" />
    </svg>
    <span className="w-[66px] shrink-0 text-white">Scale</span>
    <div className={`${field} h-[44px] w-[181px] shrink-0 overflow-hidden pl-[5px]`}>
      <span className="flex-1">1:66725</span>
      <span className="flex h-[40px] w-[37px] items-center justify-center rounded-r border border-[#4a4a4a] bg-[#333]"><svg width="16" height="9" viewBox="0 0 16 9"><path d="M0 0H16L8 9Z" fill="#8a8a8a" /></svg></span>
    </div>
    <svg width="26" height="30" viewBox="0 0 26 30" className="mr-[17px] ml-[26px] shrink-0">
      <path d="M6 14V9A7 7 0 0 1 20 9V14" stroke="#8a8a8a" strokeWidth="3" fill="none" />
      <rect x="2" y="13" width="22" height="16" rx="2" fill="#8a8a8a" />
    </svg>
    <span className="w-[108px] shrink-0">Magnifier</span>
    <div className={`${field} h-[42px] w-[180px] shrink-0 pl-[8px]`}><span className="flex-1">100%</span><Steps cls="h-[40px]" /></div>
    <span className="ml-[22px] w-[109px] shrink-0">Rotation</span>
    <div className={`${field} h-[42px] w-[181px] shrink-0 pl-[6px]`}><span className="flex-1">0.0 °</span><Steps cls="h-[40px]" /></div>
    <span className="ml-[14px] flex scale-95"><Check on fill="bg-[#1c1c1c]" /></span>
    <span className="ml-[9px] w-[106px] shrink-0">Render</span>
    <svg width="32" height="30" viewBox="0 0 32 30" className="shrink-0">
      <path d="M10 1H22L30 10Q32 20 24 25L16 29L8 25Q0 20 2 10Z" fill="#c4c4c4" stroke="#6c6c6c" />
      <path d="M2 10Q16 16 30 10M3 19Q16 25 29 19M16 1V29M10 2Q6 15 11 27M22 2Q26 15 21 27M6 5Q16 9 26 5" stroke="#4a4a4a" strokeWidth="1.500" fill="none" />
    </svg>
    <span className="ml-[4px] w-[164px] shrink-0 tracking-[0.1px] text-black">EPSG:3857</span>
    <svg width="34" height="32" viewBox="0 0 34 32" className="shrink-0"><path d="M17 0C8 0 1 6 1 13.500S8 27 17 27Q21 27 23 26Q26 30 31 31Q27 27 27.500 24C31 21 33 17.500 33 13.500C33 6 26 0 17 0Z" fill="#6c6c6c" /></svg>
    <svg width="24" height="24" viewBox="0 0 24 24" className="mt-auto ml-auto shrink-0" fill="#8a8a8a">
      {[0, 1, 2, 3].map((r) => Array.from({ length: 4 - r }, (_, c) => <rect key={`${r}${c}`} x={19 - c * 6} y={20 - r * 6} width="4" height="4" />))}
    </svg>
  </div>
);

/* ------------------------------------------------------------------ */

export default function App() {
  return (
    <div className="h-[1750px] w-[2354px] overflow-hidden bg-gradient-to-r from-[#4e83c4] to-[#4a3f3a] font-[Inter,'Liberation_Sans',sans-serif]">
      <div className="flex h-full w-full flex-col overflow-hidden rounded-[20px] border-2 border-[#686868] bg-[#323232]">
        <header className="relative flex h-[55px] shrink-0 items-center border-b-2 border-black bg-[#3c3c3c] pb-[1px] pl-[14px]">
          <div className="flex gap-4">
            <span className="h-6 w-6 rounded-full bg-[#ec6a5e]" />
            <span className="h-6 w-6 rounded-full bg-[#f4bf4f]" />
            <span className="h-6 w-6 rounded-full bg-[#61c554]" />
          </div>
          <h1 className="flex-1 pr-[119px] text-center text-[25px] font-bold tracking-[0.35px] text-[#b6b6b6]">*Sulawesi — QGIS</h1>
        </header>
        <Row1 />
        <Row2 />
        <Row3 />
        <main className="flex h-[1399px] shrink-0">
          <LayersPanel />
          <Splitter cls="w-[14px] pl-[2px]" />
          <div className="mt-[3px] h-[1396px] w-[1202px] shrink-0 overflow-hidden">
            <MapCanvas />
          </div>
          <Splitter cls="w-[14px] pl-[5px]" />
          <Processing />
        </main>
        <StatusBar />
      </div>
    </div>
  );
}
